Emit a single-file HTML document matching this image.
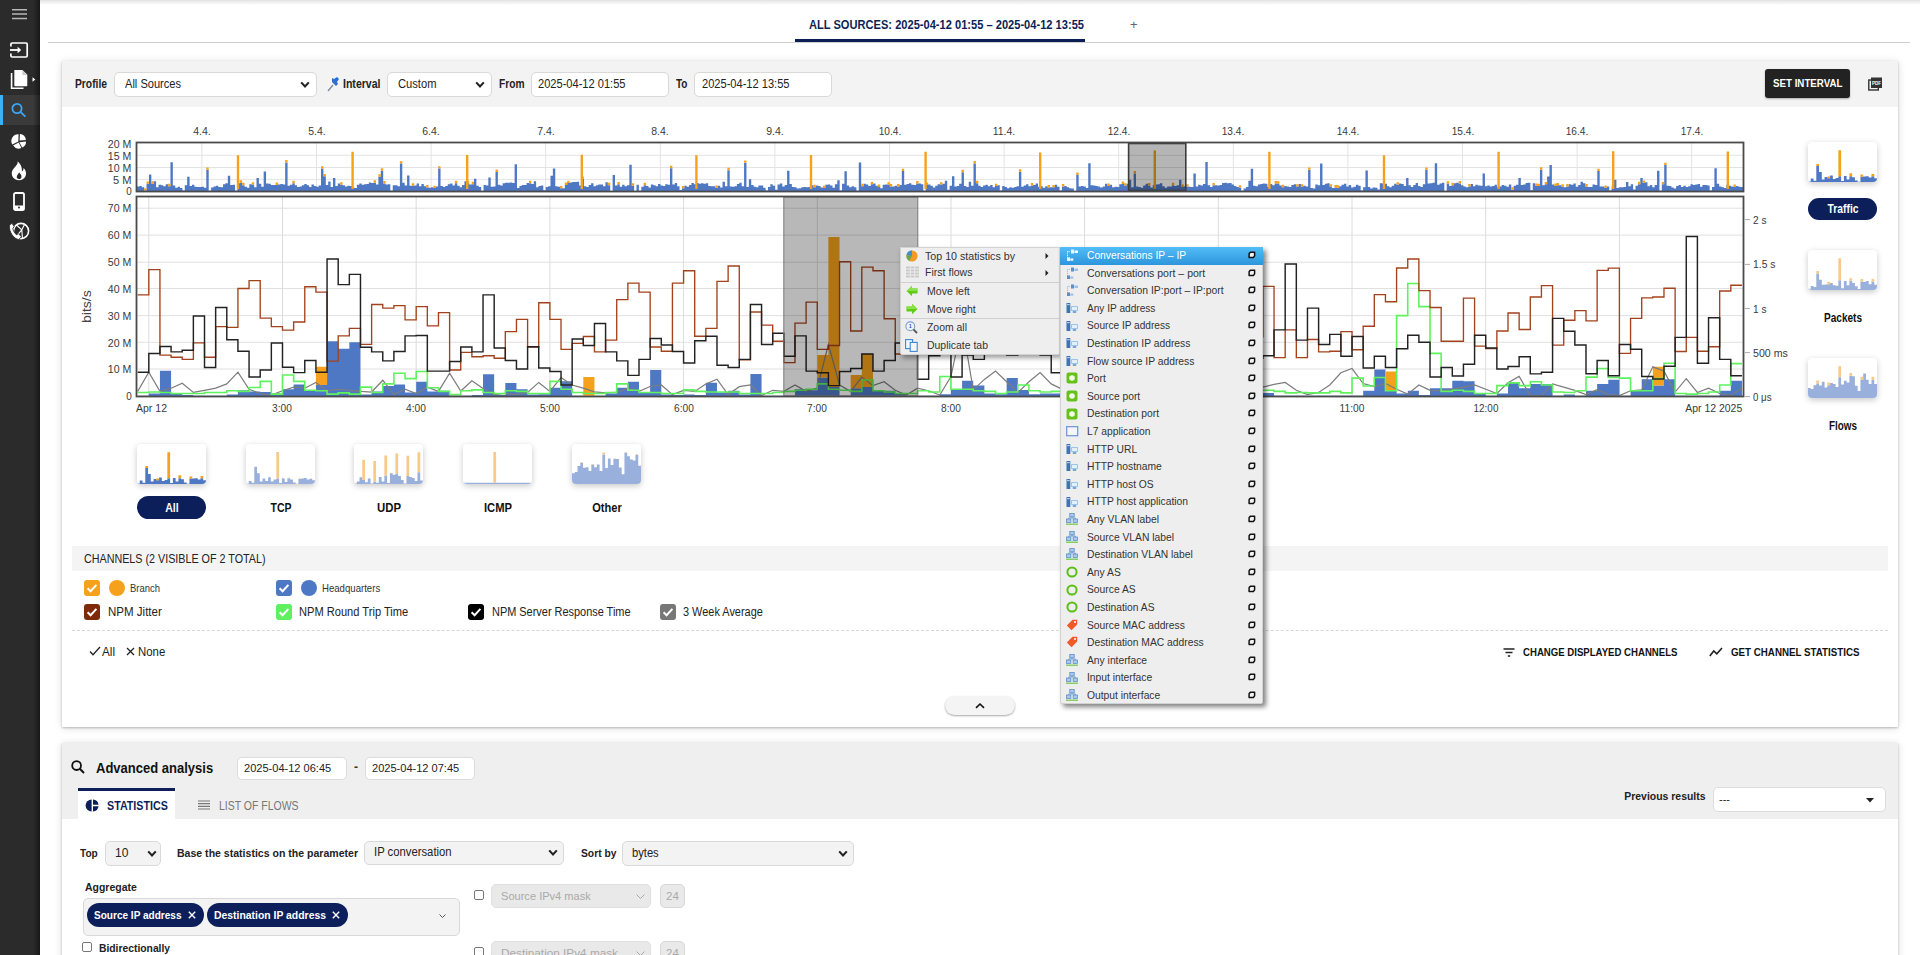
<!DOCTYPE html><html><head><meta charset="utf-8"><style>
*{box-sizing:border-box;margin:0;padding:0}
html,body{width:1920px;height:955px;overflow:hidden;background:#fff;font-family:"Liberation Sans",sans-serif;color:#222}
.a{position:absolute}
.t{position:absolute;white-space:nowrap;line-height:1}
.sel{position:absolute;background:#fff;border:1px solid #d9d9d9;border-radius:5px}
svg{position:absolute;overflow:visible}
</style></head><body><div class="a" style="left:40px;top:0;width:1880px;height:5px;background:linear-gradient(#e2e2e2,#fff)"></div><div class="a" style="left:0;top:0;width:40px;height:955px;background:#2b2b2b"></div><div class="a" style="left:0;top:95px;width:40px;height:30px;background:#3a3a3a"></div><div class="a" style="left:0;top:95px;width:3px;height:30px;background:#3ab0f6"></div><div class="a" style="left:33px;top:0;width:7px;height:955px;background:linear-gradient(90deg,rgba(0,0,0,0),rgba(0,0,0,.45))"></div><svg style="left:12px;top:8px" width="15" height="12" viewBox="0 0 15 12"><path d="M0 1.8H15M0 6H15M0 10.4H15" stroke="#b8b8b8" stroke-width="1.5"/></svg><svg style="left:9px;top:42px" width="20" height="16" viewBox="0 0 20 16"><path d="M1.9 4.6V2.2C1.9 1.5 2.4 1 3.1 1H17C17.7 1 18.2 1.5 18.2 2.2V13.8C18.2 14.5 17.7 15 17 15H3.1C2.4 15 1.9 14.5 1.9 13.8V11.4" fill="none" stroke="#fff" stroke-width="1.7"/><path d="M1 8H10.5" stroke="#fff" stroke-width="1.8"/><path d="M8.6 4.8L12.2 8L8.6 11.2Z" fill="#fff"/></svg><svg style="left:10px;top:69px" width="28" height="21" viewBox="0 0 28 21"><path d="M1.6 4V19.2H13.5" fill="none" stroke="#fff" stroke-width="1.6"/><path d="M4.3 1.6C4.3 1.2 4.6 0.9 5 0.9H12.5L17.3 5.7V16.5C17.3 16.9 17 17.2 16.6 17.2H5C4.6 17.2 4.3 16.9 4.3 16.5Z" fill="#fff"/><path d="M12.3 0.9V5.9H17.3" fill="#ccc"/><path d="M22.5 8.3L25.3 10.5L22.5 12.7Z" fill="#fff"/></svg><svg style="left:11px;top:101px" width="16" height="17" viewBox="0 0 16 17"><circle cx="6" cy="7.5" r="4.6" fill="none" stroke="#3aa6f5" stroke-width="1.8"/><path d="M9.4 10.9L14.4 15.6" stroke="#3aa6f5" stroke-width="1.9"/></svg><svg style="left:11px;top:133px" width="16" height="16" viewBox="0 0 16 16"><path d="M7.3 8.6L7.6 1.2A6.9 6.9 0 0 0 1.3 11.6Z" fill="#fff"/><path d="M8.6 7.4L8.9 0.9A6.8 6.8 0 0 1 14.9 6.9Z" fill="#fff"/><path d="M8.4 9.2L15 8.4A6.8 6.8 0 0 1 11.2 14.6Z" fill="#fff"/><path d="M7.7 9.6L10.3 15.1A6.8 6.8 0 0 1 2.1 12.6Z" fill="#fff"/></svg><svg style="left:11px;top:161px" width="16" height="20" viewBox="0 0 16 20"><path d="M6.5 0.5C7.5 3.5 3.2 6 1.4 9.6C-0.6 13.8 2.2 19.2 8 19.3C13.8 19.3 16.3 13.7 14.4 9.5C13.9 8.4 13.2 7.6 12.5 7C12.6 8.6 12 9.9 10.9 10.6C11.3 6.5 9.6 2.6 6.5 0.5Z" fill="#fff"/><path d="M8.2 11.3C9.2 13 10.8 14.2 10.5 16.2C10.2 17.6 9.1 18 8 18C6.4 18 5.6 16.8 5.8 15.5C6 14 7.4 13.4 8.2 11.3Z" fill="#282828"/></svg><svg style="left:13px;top:192px" width="12" height="19" viewBox="0 0 12 19"><rect x="1" y="1" width="10" height="17" rx="1.6" fill="none" stroke="#fff" stroke-width="1.8"/><rect x="1.5" y="13.5" width="9" height="4" fill="#fff"/><circle cx="6" cy="15.6" r="1" fill="#282828"/></svg><svg style="left:8px;top:221px" width="22" height="21" viewBox="0 0 22 21"><circle cx="13" cy="10" r="7.6" fill="none" stroke="#fff" stroke-width="1.6"/><path d="M8.5 4L13.8 8.8L16.5 3.5M13.8 8.8L14.5 17.6M13.8 8.8L8.2 15.6" fill="none" stroke="#fff" stroke-width="1.1"/><path d="M1.5 4.6C2.3 3.4 3.1 2.6 4.1 2.3L6.2 5.8L4.9 7.2C4.9 9.5 6.7 12.7 8.8 13.8L10.3 12.6L13.2 15.5C12.8 16.6 11.8 17.9 10.6 18.4C6.3 18.3 0.6 10.9 1.5 4.6Z" fill="#fff" stroke="#282828" stroke-width="0.8"/></svg><div class="t" style="left:809px;top:18.7px;font-size:12px;font-weight:bold;color:#0c1f55;transform:scaleX(0.9250);transform-origin:0 0;">ALL SOURCES: 2025-04-12 01:55 – 2025-04-12 13:55</div><div class="a" style="left:795px;top:39px;width:290px;height:3px;background:#0c1f55"></div><div class="a" style="left:48px;top:42px;width:1862px;height:1px;background:#cfcfcf"></div><div class="t" style="left:1130px;top:18.2px;font-size:13px;font-weight:normal;color:#666;">+</div><div class="a" style="left:62px;top:61px;width:1836px;height:666px;background:#fff;box-shadow:0 1px 2px rgba(0,0,0,.22),0 1px 8px rgba(0,0,0,.14)"></div><div class="a" style="left:62px;top:61px;width:1836px;height:46px;background:#f3f3f3"></div><div class="t" style="left:75px;top:78.2px;font-size:12px;font-weight:bold;color:#222;transform:scaleX(0.8569);transform-origin:0 0;">Profile</div><div class="sel" style="left:114px;top:72px;width:203px;height:25px"></div><div class="t" style="left:124.5px;top:78.2px;font-size:12px;font-weight:normal;color:#222;transform:scaleX(0.9225);transform-origin:0 0;">All Sources</div><svg style="left:300px;top:80.5px" width="10" height="7" viewBox="0 0 10 7"><path d="M1.2 1.4 L5.0 5.4 L8.8 1.4" fill="none" stroke="#222" stroke-width="2.1"/></svg><svg style="left:327px;top:76px" width="14" height="16" viewBox="0 0 14 16"><path d="M1 15 L6 9" stroke="#7a8a9a" stroke-width="1.3"/><path d="M5 6 L9 10 L11 8 L10 6 L12 3 L10 1 L7 3 L5 2 Z" fill="#2b6fd6"/></svg><div class="t" style="left:343px;top:78.2px;font-size:12px;font-weight:bold;color:#222;transform:scaleX(0.8785);transform-origin:0 0;">Interval</div><div class="sel" style="left:387px;top:72px;width:105px;height:25px"></div><div class="t" style="left:397.5px;top:78.2px;font-size:12px;font-weight:normal;color:#222;transform:scaleX(0.9312);transform-origin:0 0;">Custom</div><svg style="left:475px;top:80.5px" width="10" height="7" viewBox="0 0 10 7"><path d="M1.2 1.4 L5.0 5.4 L8.8 1.4" fill="none" stroke="#222" stroke-width="2.1"/></svg><div class="t" style="left:498.5px;top:78.2px;font-size:12px;font-weight:bold;color:#222;transform:scaleX(0.8500);transform-origin:0 0;">From</div><div class="sel" style="left:531px;top:72px;width:138px;height:25px"></div><div class="t" style="left:538px;top:78.2px;font-size:12px;font-weight:normal;color:#222;transform:scaleX(0.9235);transform-origin:0 0;">2025-04-12 01:55</div><div class="t" style="left:676px;top:78.2px;font-size:12px;font-weight:bold;color:#222;transform:scaleX(0.8345);transform-origin:0 0;">To</div><div class="sel" style="left:694px;top:72px;width:138px;height:25px"></div><div class="t" style="left:701.5px;top:78.2px;font-size:12px;font-weight:normal;color:#222;transform:scaleX(0.9235);transform-origin:0 0;">2025-04-12 13:55</div><div class="a" style="left:1765px;top:69px;width:85px;height:29px;background:#222;border-radius:3px;box-shadow:0 1px 2px rgba(0,0,0,.3)"></div><div class="t" style="left:1773px;top:78.2px;font-size:11px;font-weight:bold;color:#fff;transform:scaleX(0.8861);transform-origin:0 0;">SET INTERVAL</div><svg style="left:1868px;top:77px" width="14" height="14" viewBox="0 0 14 14"><rect x="0.8" y="3" width="9.5" height="10" fill="none" stroke="#333" stroke-width="1.4"/><rect x="3" y="0.5" width="11" height="10.5" fill="#333"/><text x="8.5" y="7.5" font-size="4.5" font-family="Liberation Sans" font-weight="bold" fill="#fff" text-anchor="middle">PDF</text></svg><svg style="left:0;top:0" width="1920" height="955" viewBox="0 0 1920 955"><line x1="137" x2="1743" y1="155.3" y2="155.3" stroke="#e3e3e3" stroke-width="1"/><line x1="137" x2="1743" y1="167.5" y2="167.5" stroke="#e3e3e3" stroke-width="1"/><line x1="137" x2="1743" y1="179.4" y2="179.4" stroke="#e3e3e3" stroke-width="1"/><line x1="201.9" x2="201.9" y1="143" y2="191" stroke="#e3e3e3" stroke-width="1"/><line x1="316.5" x2="316.5" y1="143" y2="191" stroke="#e3e3e3" stroke-width="1"/><line x1="431.1" x2="431.1" y1="143" y2="191" stroke="#e3e3e3" stroke-width="1"/><line x1="545.7" x2="545.7" y1="143" y2="191" stroke="#e3e3e3" stroke-width="1"/><line x1="660.3" x2="660.3" y1="143" y2="191" stroke="#e3e3e3" stroke-width="1"/><line x1="774.9" x2="774.9" y1="143" y2="191" stroke="#e3e3e3" stroke-width="1"/><line x1="889.5" x2="889.5" y1="143" y2="191" stroke="#e3e3e3" stroke-width="1"/><line x1="1004.1" x2="1004.1" y1="143" y2="191" stroke="#e3e3e3" stroke-width="1"/><line x1="1118.7" x2="1118.7" y1="143" y2="191" stroke="#e3e3e3" stroke-width="1"/><line x1="1233.3" x2="1233.3" y1="143" y2="191" stroke="#e3e3e3" stroke-width="1"/><line x1="1347.9" x2="1347.9" y1="143" y2="191" stroke="#e3e3e3" stroke-width="1"/><line x1="1462.5" x2="1462.5" y1="143" y2="191" stroke="#e3e3e3" stroke-width="1"/><line x1="1577.1" x2="1577.1" y1="143" y2="191" stroke="#e3e3e3" stroke-width="1"/><line x1="1691.7" x2="1691.7" y1="143" y2="191" stroke="#e3e3e3" stroke-width="1"/><path d="M137.00 191V186.56H139.39V191ZM139.39 191V186.12H141.78V191ZM141.78 191V187.18H144.17V191ZM144.17 191V190.56H146.56V191ZM146.56 191V183.84H148.95V191ZM148.95 191V174.44H151.34V191ZM151.34 191V183.66H153.73V191ZM153.73 191V181.23H156.12V191ZM156.12 191V187.16H158.51V191ZM158.51 191V184.70H160.90V191ZM160.90 191V185.13H163.29V191ZM163.29 191V186.32H165.68V191ZM165.68 191V184.33H168.07V191ZM168.07 191V186.18H170.46V191ZM170.46 191V162.21H172.85V191ZM172.85 191V185.59H175.24V191ZM175.24 191V187.77H177.63V191ZM177.63 191V186.65H180.02V191ZM180.02 191V187.92H182.41V191ZM182.41 191V190.52H184.80V191ZM184.80 191V185.28H187.19V191ZM187.19 191V176.86H189.58V191ZM189.58 191V185.98H191.97V191ZM191.97 191V184.66H194.36V191ZM194.36 191V186.83H196.75V191ZM196.75 191V187.12H199.14V191ZM199.14 191V187.10H201.53V191ZM201.53 191V186.68H203.92V191ZM203.92 191V187.81H206.31V191ZM206.31 191V169.80H208.70V191ZM208.70 191V190.87H211.09V191ZM211.09 191V187.48H213.48V191ZM213.48 191V186.59H215.87V191ZM215.87 191V185.64H218.26V191ZM218.26 191V187.11H220.65V191ZM220.65 191V187.34H223.04V191ZM223.04 191V184.34H225.43V191ZM225.43 191V183.25H227.82V191ZM227.82 191V175.67H230.21V191ZM230.21 191V184.91H232.60V191ZM232.60 191V184.79H234.99V191ZM234.99 191V190.67H237.38V191ZM237.38 191V183.31H239.77V191ZM239.77 191V182.63H242.16V191ZM242.16 191V185.23H244.55V191ZM244.55 191V186.82H246.94V191ZM246.94 191V187.74H249.33V191ZM249.33 191V184.34H251.72V191ZM251.72 191V184.59H254.11V191ZM254.11 191V187.24H256.50V191ZM256.50 191V178.02H258.89V191ZM258.89 191V183.87H261.28V191ZM261.28 191V186.66H263.67V191ZM263.67 191V171.44H266.06V191ZM266.06 191V183.59H268.45V191ZM268.45 191V183.80H270.84V191ZM270.84 191V185.10H273.23V191ZM273.23 191V184.98H275.62V191ZM275.62 191V184.88H278.01V191ZM278.01 191V184.59H280.40V191ZM280.40 191V184.05H282.79V191ZM282.79 191V184.47H285.18V191ZM285.18 191V162.48H287.57V191ZM287.57 191V185.66H289.96V191ZM289.96 191V184.67H292.35V191ZM292.35 191V183.23H294.74V191ZM294.74 191V185.36H297.13V191ZM297.13 191V186.91H299.52V191ZM299.52 191V186.38H301.91V191ZM301.91 191V185.14H304.30V191ZM304.30 191V183.95H306.69V191ZM306.69 191V185.31H309.08V191ZM309.08 191V187.04H311.47V191ZM311.47 191V184.62H313.86V191ZM313.86 191V186.09H316.25V191ZM316.25 191V186.76H318.64V191ZM318.64 191V185.49H321.03V191ZM321.03 191V168.58H323.42V191ZM323.42 191V176.32H325.81V191ZM325.81 191V185.10H328.20V191ZM328.20 191V181.62H330.59V191ZM330.59 191V186.95H332.98V191ZM332.98 191V178.07H335.37V191ZM335.37 191V185.92H337.76V191ZM337.76 191V183.62H340.15V191ZM340.15 191V184.75H342.54V191ZM342.54 191V185.28H344.93V191ZM344.93 191V186.41H347.32V191ZM347.32 191V185.81H349.71V191ZM349.71 191V186.11H352.10V191ZM352.10 191V187.61H354.49V191ZM354.49 191V188.10H356.88V191ZM356.88 191V184.82H359.27V191ZM359.27 191V183.48H361.66V191ZM361.66 191V184.74H364.05V191ZM364.05 191V184.15H366.44V191ZM366.44 191V183.91H368.83V191ZM368.83 191V182.62H371.22V191ZM371.22 191V182.89H373.61V191ZM373.61 191V182.72H376.00V191ZM376.00 191V184.50H378.39V191ZM378.39 191V176.77H380.78V191ZM380.78 191V170.68H383.17V191ZM383.17 191V183.50H385.56V191ZM385.56 191V184.52H387.95V191ZM387.95 191V184.20H390.34V191ZM390.34 191V190.68H392.73V191ZM392.73 191V185.25H395.12V191ZM395.12 191V185.28H397.51V191ZM397.51 191V186.23H399.90V191ZM399.90 191V163.56H402.29V191ZM402.29 191V182.72H404.68V191ZM404.68 191V185.58H407.07V191ZM407.07 191V175.62H409.46V191ZM409.46 191V185.73H411.85V191ZM411.85 191V185.63H414.24V191ZM414.24 191V185.38H416.63V191ZM416.63 191V183.53H419.02V191ZM419.02 191V186.28H421.41V191ZM421.41 191V184.04H423.80V191ZM423.80 191V186.22H426.19V191ZM426.19 191V187.47H428.58V191ZM428.58 191V187.75H430.97V191ZM430.97 191V187.30H433.36V191ZM433.36 191V188.07H435.75V191ZM435.75 191V186.60H438.14V191ZM438.14 191V168.54H440.53V191ZM440.53 191V186.03H442.92V191ZM442.92 191V187.06H445.31V191ZM445.31 191V186.06H447.70V191ZM447.70 191V184.14H450.09V191ZM450.09 191V183.48H452.48V191ZM452.48 191V185.41H454.87V191ZM454.87 191V183.21H457.26V191ZM457.26 191V185.63H459.65V191ZM459.65 191V187.36H462.04V191ZM462.04 191V185.02H464.43V191ZM464.43 191V181.15H466.82V191ZM466.82 191V183.17H469.21V191ZM469.21 191V184.41H471.60V191ZM471.60 191V184.17H473.99V191ZM473.99 191V178.63H476.38V191ZM476.38 191V185.70H478.77V191ZM478.77 191V186.91H481.16V191ZM481.16 191V190.91H483.55V191ZM483.55 191V185.08H485.94V191ZM485.94 191V185.45H488.33V191ZM488.33 191V177.55H490.72V191ZM490.72 191V186.70H493.11V191ZM493.11 191V186.45H495.50V191ZM495.50 191V172.00H497.89V191ZM497.89 191V184.73H500.28V191ZM500.28 191V185.57H502.67V191ZM502.67 191V183.36H505.06V191ZM505.06 191V182.68H507.45V191ZM507.45 191V182.81H509.84V191ZM509.84 191V182.57H512.23V191ZM512.23 191V182.98H514.62V191ZM514.62 191V164.30H517.01V191ZM517.01 191V188.04H519.40V191ZM519.40 191V186.07H521.79V191ZM521.79 191V185.00H524.18V191ZM524.18 191V184.95H526.57V191ZM526.57 191V183.00H528.96V191ZM528.96 191V183.19H531.35V191ZM531.35 191V183.93H533.74V191ZM533.74 191V181.19H536.13V191ZM536.13 191V187.17H538.52V191ZM538.52 191V186.01H540.91V191ZM540.91 191V185.42H543.30V191ZM543.30 191V190.14H545.69V191ZM545.69 191V186.88H548.08V191ZM548.08 191V186.24H550.47V191ZM550.47 191V175.79H552.86V191ZM552.86 191V168.56H555.25V191ZM555.25 191V186.36H557.64V191ZM557.64 191V186.85H560.03V191ZM560.03 191V188.28H562.42V191ZM562.42 191V188.28H564.81V191ZM564.81 191V184.96H567.20V191ZM567.20 191V183.05H569.59V191ZM569.59 191V182.57H571.98V191ZM571.98 191V182.05H574.37V191ZM574.37 191V181.97H576.76V191ZM576.76 191V181.75H579.15V191ZM579.15 191V185.53H581.54V191ZM581.54 191V178.80H583.93V191ZM583.93 191V186.35H586.32V191ZM586.32 191V186.94H588.71V191ZM588.71 191V184.89H591.10V191ZM591.10 191V183.18H593.49V191ZM593.49 191V186.18H595.88V191ZM595.88 191V185.23H598.27V191ZM598.27 191V184.54H600.66V191ZM600.66 191V184.46H603.05V191ZM603.05 191V186.15H605.44V191ZM605.44 191V182.16H607.83V191ZM607.83 191V185.19H610.22V191ZM610.22 191V190.88H612.61V191ZM612.61 191V174.97H615.00V191ZM615.00 191V185.41H617.39V191ZM617.39 191V184.35H619.78V191ZM619.78 191V186.68H622.17V191ZM622.17 191V184.81H624.56V191ZM624.56 191V186.27H626.95V191ZM626.95 191V185.14H629.34V191ZM629.34 191V164.74H631.73V191ZM631.73 191V185.64H634.12V191ZM634.12 191V190.88H636.51V191ZM636.51 191V184.82H638.90V191ZM638.90 191V190.69H641.29V191ZM641.29 191V186.67H643.68V191ZM643.68 191V185.14H646.07V191ZM646.07 191V185.97H648.46V191ZM648.46 191V187.42H650.85V191ZM650.85 191V184.47H653.24V191ZM653.24 191V185.31H655.63V191ZM655.63 191V186.22H658.02V191ZM658.02 191V184.04H660.41V191ZM660.41 191V185.44H662.80V191ZM662.80 191V185.96H665.19V191ZM665.19 191V184.36H667.58V191ZM667.58 191V184.70H669.97V191ZM669.97 191V168.27H672.36V191ZM672.36 191V184.48H674.75V191ZM674.75 191V182.94H677.14V191ZM677.14 191V186.29H679.53V191ZM679.53 191V189.94H681.92V191ZM681.92 191V188.35H684.31V191ZM684.31 191V185.67H686.70V191ZM686.70 191V186.82H689.09V191ZM689.09 191V184.89H691.48V191ZM691.48 191V183.11H693.87V191ZM693.87 191V184.25H696.26V191ZM696.26 191V183.06H698.65V191ZM698.65 191V183.64H701.04V191ZM701.04 191V183.16H703.43V191ZM703.43 191V183.80H705.82V191ZM705.82 191V183.37H708.21V191ZM708.21 191V186.12H710.60V191ZM710.60 191V186.33H712.99V191ZM712.99 191V186.20H715.38V191ZM715.38 191V187.78H717.77V191ZM717.77 191V185.85H720.16V191ZM720.16 191V187.61H722.55V191ZM722.55 191V181.82H724.94V191ZM724.94 191V186.35H727.33V191ZM727.33 191V170.17H729.72V191ZM729.72 191V186.45H732.11V191ZM732.11 191V186.76H734.50V191ZM734.50 191V186.15H736.89V191ZM736.89 191V183.92H739.28V191ZM739.28 191V182.73H741.67V191ZM741.67 191V186.26H744.06V191ZM744.06 191V162.84H746.45V191ZM746.45 191V186.88H748.84V191ZM748.84 191V179.20H751.23V191ZM751.23 191V184.96H753.62V191ZM753.62 191V186.78H756.01V191ZM756.01 191V187.15H758.40V191ZM758.40 191V185.62H760.79V191ZM760.79 191V185.39H763.18V191ZM763.18 191V187.68H765.57V191ZM765.57 191V190.61H767.96V191ZM767.96 191V187.08H770.35V191ZM770.35 191V184.16H772.74V191ZM772.74 191V185.77H775.13V191ZM775.13 191V189.81H777.52V191ZM777.52 191V184.50H779.91V191ZM779.91 191V183.55H782.30V191ZM782.30 191V186.51H784.69V191ZM784.69 191V184.98H787.08V191ZM787.08 191V170.77H789.47V191ZM789.47 191V184.08H791.86V191ZM791.86 191V187.04H794.25V191ZM794.25 191V187.36H796.64V191ZM796.64 191V188.52H799.03V191ZM799.03 191V188.17H801.42V191ZM801.42 191V187.25H803.81V191ZM803.81 191V187.00H806.20V191ZM806.20 191V187.26H808.59V191ZM808.59 191V187.05H810.98V191ZM810.98 191V185.18H813.37V191ZM813.37 191V187.18H815.76V191ZM815.76 191V185.45H818.15V191ZM818.15 191V185.90H820.54V191ZM820.54 191V187.51H822.93V191ZM822.93 191V188.08H825.32V191ZM825.32 191V184.76H827.71V191ZM827.71 191V184.50H830.10V191ZM830.10 191V185.55H832.49V191ZM832.49 191V187.69H834.88V191ZM834.88 191V184.31H837.27V191ZM837.27 191V180.22H839.66V191ZM839.66 191V190.46H842.05V191ZM842.05 191V183.68H844.44V191ZM844.44 191V171.29H846.83V191ZM846.83 191V185.59H849.22V191ZM849.22 191V187.14H851.61V191ZM851.61 191V186.15H854.00V191ZM854.00 191V187.14H856.39V191ZM856.39 191V190.65H858.78V191ZM858.78 191V162.44H861.17V191ZM861.17 191V186.13H863.56V191ZM863.56 191V183.65H865.95V191ZM865.95 191V184.46H868.34V191ZM868.34 191V186.08H870.73V191ZM870.73 191V184.32H873.12V191ZM873.12 191V183.50H875.51V191ZM875.51 191V185.75H877.90V191ZM877.90 191V187.01H880.29V191ZM880.29 191V188.27H882.68V191ZM882.68 191V184.76H885.07V191ZM885.07 191V184.39H887.46V191ZM887.46 191V184.58H889.85V191ZM889.85 191V186.42H892.24V191ZM892.24 191V186.41H894.63V191ZM894.63 191V185.81H897.02V191ZM897.02 191V186.38H899.41V191ZM899.41 191V185.12H901.80V191ZM901.80 191V171.04H904.19V191ZM904.19 191V184.65H906.58V191ZM906.58 191V183.98H908.97V191ZM908.97 191V183.29H911.36V191ZM911.36 191V184.79H913.75V191ZM913.75 191V185.05H916.14V191ZM916.14 191V183.47H918.53V191ZM918.53 191V183.56H920.92V191ZM920.92 191V184.18H923.31V191ZM923.31 191V190.82H925.70V191ZM925.70 191V185.02H928.09V191ZM928.09 191V184.40H930.48V191ZM930.48 191V185.86H932.87V191ZM932.87 191V187.59H935.26V191ZM935.26 191V185.69H937.65V191ZM937.65 191V184.20H940.04V191ZM940.04 191V184.61H942.43V191ZM942.43 191V183.77H944.82V191ZM944.82 191V180.84H947.21V191ZM947.21 191V189.71H949.60V191ZM949.60 191V185.73H951.99V191ZM951.99 191V176.13H954.38V191ZM954.38 191V186.45H956.77V191ZM956.77 191V186.04H959.16V191ZM959.16 191V183.84H961.55V191ZM961.55 191V172.24H963.94V191ZM963.94 191V185.94H966.33V191ZM966.33 191V187.02H968.72V191ZM968.72 191V181.84H971.11V191ZM971.11 191V185.86H973.50V191ZM973.50 191V163.40H975.89V191ZM975.89 191V183.16H978.28V191ZM978.28 191V185.68H980.67V191ZM980.67 191V186.93H983.06V191ZM983.06 191V185.39H985.45V191ZM985.45 191V184.71H987.84V191ZM987.84 191V186.35H990.23V191ZM990.23 191V185.12H992.62V191ZM992.62 191V187.16H995.01V191ZM995.01 191V186.11H997.40V191ZM997.40 191V185.32H999.79V191ZM999.79 191V190.59H1002.18V191ZM1002.18 191V185.97H1004.57V191ZM1004.57 191V187.11H1006.96V191ZM1006.96 191V188.31H1009.35V191ZM1009.35 191V187.27H1011.74V191ZM1011.74 191V187.72H1014.13V191ZM1014.13 191V187.12H1016.52V191ZM1016.52 191V186.14H1018.91V191ZM1018.91 191V171.70H1021.30V191ZM1021.30 191V186.71H1023.69V191ZM1023.69 191V185.55H1026.08V191ZM1026.08 191V184.28H1028.47V191ZM1028.47 191V186.13H1030.86V191ZM1030.86 191V185.41H1033.25V191ZM1033.25 191V185.01H1035.64V191ZM1035.64 191V183.60H1038.03V191ZM1038.03 191V186.80H1040.42V191ZM1040.42 191V186.33H1042.81V191ZM1042.81 191V187.78H1045.20V191ZM1045.20 191V186.32H1047.59V191ZM1047.59 191V187.45H1049.98V191ZM1049.98 191V187.20H1052.37V191ZM1052.37 191V187.31H1054.76V191ZM1054.76 191V184.86H1057.15V191ZM1057.15 191V186.73H1059.54V191ZM1059.54 191V190.41H1061.93V191ZM1061.93 191V186.43H1064.32V191ZM1064.32 191V185.95H1066.71V191ZM1066.71 191V187.29H1069.10V191ZM1069.10 191V188.36H1071.49V191ZM1071.49 191V188.39H1073.88V191ZM1073.88 191V190.95H1076.27V191ZM1076.27 191V174.93H1078.66V191ZM1078.66 191V186.39H1081.05V191ZM1081.05 191V186.06H1083.44V191ZM1083.44 191V186.47H1085.83V191ZM1085.83 191V187.99H1088.22V191ZM1088.22 191V163.21H1090.61V191ZM1090.61 191V185.24H1093.00V191ZM1093.00 191V185.54H1095.39V191ZM1095.39 191V186.04H1097.78V191ZM1097.78 191V186.42H1100.17V191ZM1100.17 191V187.41H1102.56V191ZM1102.56 191V186.49H1104.95V191ZM1104.95 191V183.72H1107.34V191ZM1107.34 191V186.01H1109.73V191ZM1109.73 191V184.86H1112.12V191ZM1112.12 191V187.36H1114.51V191ZM1114.51 191V186.81H1116.90V191ZM1116.90 191V187.12H1119.29V191ZM1119.29 191V184.26H1121.68V191ZM1121.68 191V183.93H1124.07V191ZM1124.07 191V185.58H1126.46V191ZM1126.46 191V183.81H1128.85V191ZM1128.85 191V179.76H1131.24V191ZM1131.24 191V187.16H1133.63V191ZM1133.63 191V173.39H1136.02V191ZM1136.02 191V186.57H1138.41V191ZM1138.41 191V187.05H1140.80V191ZM1140.80 191V187.77H1143.19V191ZM1143.19 191V185.55H1145.58V191ZM1145.58 191V183.87H1147.97V191ZM1147.97 191V185.45H1150.36V191ZM1150.36 191V187.60H1152.75V191ZM1152.75 191V185.05H1155.14V191ZM1155.14 191V184.52H1157.53V191ZM1157.53 191V184.20H1159.92V191ZM1159.92 191V183.25H1162.31V191ZM1162.31 191V186.32H1164.70V191ZM1164.70 191V187.83H1167.09V191ZM1167.09 191V186.55H1169.48V191ZM1169.48 191V186.40H1171.87V191ZM1171.87 191V185.15H1174.26V191ZM1174.26 191V186.04H1176.65V191ZM1176.65 191V185.36H1179.04V191ZM1179.04 191V179.78H1181.43V191ZM1181.43 191V187.01H1183.82V191ZM1183.82 191V186.19H1186.21V191ZM1186.21 191V186.58H1188.60V191ZM1188.60 191V186.66H1190.99V191ZM1190.99 191V187.08H1193.38V191ZM1193.38 191V173.39H1195.77V191ZM1195.77 191V186.48H1198.16V191ZM1198.16 191V184.71H1200.55V191ZM1200.55 191V185.53H1202.94V191ZM1202.94 191V184.03H1205.33V191ZM1205.33 191V161.93H1207.72V191ZM1207.72 191V185.22H1210.11V191ZM1210.11 191V186.93H1212.50V191ZM1212.50 191V185.33H1214.89V191ZM1214.89 191V185.21H1217.28V191ZM1217.28 191V185.39H1219.67V191ZM1219.67 191V184.88H1222.06V191ZM1222.06 191V183.11H1224.45V191ZM1224.45 191V182.68H1226.84V191ZM1226.84 191V183.34H1229.23V191ZM1229.23 191V183.06H1231.62V191ZM1231.62 191V184.43H1234.01V191ZM1234.01 191V185.97H1236.40V191ZM1236.40 191V186.88H1238.79V191ZM1238.79 191V187.56H1241.18V191ZM1241.18 191V190.85H1243.57V191ZM1243.57 191V188.52H1245.96V191ZM1245.96 191V186.93H1248.35V191ZM1248.35 191V180.77H1250.74V191ZM1250.74 191V168.65H1253.13V191ZM1253.13 191V185.79H1255.52V191ZM1255.52 191V186.37H1257.91V191ZM1257.91 191V184.40H1260.30V191ZM1260.30 191V184.07H1262.69V191ZM1262.69 191V183.49H1265.08V191ZM1265.08 191V183.83H1267.47V191ZM1267.47 191V186.92H1269.86V191ZM1269.86 191V184.02H1272.25V191ZM1272.25 191V185.18H1274.64V191ZM1274.64 191V183.40H1277.03V191ZM1277.03 191V183.59H1279.42V191ZM1279.42 191V185.59H1281.81V191ZM1281.81 191V187.23H1284.20V191ZM1284.20 191V186.08H1286.59V191ZM1286.59 191V186.61H1288.98V191ZM1288.98 191V186.96H1291.37V191ZM1291.37 191V184.95H1293.76V191ZM1293.76 191V184.37H1296.15V191ZM1296.15 191V186.57H1298.54V191ZM1298.54 191V184.02H1300.93V191ZM1300.93 191V186.53H1303.32V191ZM1303.32 191V185.66H1305.71V191ZM1305.71 191V186.57H1308.10V191ZM1308.10 191V169.79H1310.49V191ZM1310.49 191V187.93H1312.88V191ZM1312.88 191V188.47H1315.27V191ZM1315.27 191V184.60H1317.66V191ZM1317.66 191V185.15H1320.05V191ZM1320.05 191V163.43H1322.44V191ZM1322.44 191V185.07H1324.83V191ZM1324.83 191V183.66H1327.22V191ZM1327.22 191V183.16H1329.61V191ZM1329.61 191V186.56H1332.00V191ZM1332.00 191V187.88H1334.39V191ZM1334.39 191V187.41H1336.78V191ZM1336.78 191V187.65H1339.17V191ZM1339.17 191V186.33H1341.56V191ZM1341.56 191V184.81H1343.95V191ZM1343.95 191V183.71H1346.34V191ZM1346.34 191V186.47H1348.73V191ZM1348.73 191V185.01H1351.12V191ZM1351.12 191V187.41H1353.51V191ZM1353.51 191V186.85H1355.90V191ZM1355.90 191V184.70H1358.29V191ZM1358.29 191V185.78H1360.68V191ZM1360.68 191V190.52H1363.07V191ZM1363.07 191V187.20H1365.46V191ZM1365.46 191V170.52H1367.85V191ZM1367.85 191V187.07H1370.24V191ZM1370.24 191V188.40H1372.63V191ZM1372.63 191V187.59H1375.02V191ZM1375.02 191V187.76H1377.41V191ZM1377.41 191V189.58H1379.80V191ZM1379.80 191V183.35H1382.19V191ZM1382.19 191V183.60H1384.58V191ZM1384.58 191V183.84H1386.97V191ZM1386.97 191V186.16H1389.36V191ZM1389.36 191V187.37H1391.75V191ZM1391.75 191V185.68H1394.14V191ZM1394.14 191V183.83H1396.53V191ZM1396.53 191V184.72H1398.92V191ZM1398.92 191V183.62H1401.31V191ZM1401.31 191V183.90H1403.70V191ZM1403.70 191V185.98H1406.09V191ZM1406.09 191V178.08H1408.48V191ZM1408.48 191V185.13H1410.87V191ZM1410.87 191V186.89H1413.26V191ZM1413.26 191V185.04H1415.65V191ZM1415.65 191V183.09H1418.04V191ZM1418.04 191V186.08H1420.43V191ZM1420.43 191V186.94H1422.82V191ZM1422.82 191V184.17H1425.21V191ZM1425.21 191V169.80H1427.60V191ZM1427.60 191V183.53H1429.99V191ZM1429.99 191V183.22H1432.38V191ZM1432.38 191V182.82H1434.77V191ZM1434.77 191V163.34H1437.16V191ZM1437.16 191V184.69H1439.55V191ZM1439.55 191V183.53H1441.94V191ZM1441.94 191V182.78H1444.33V191ZM1444.33 191V190.95H1446.72V191ZM1446.72 191V183.57H1449.11V191ZM1449.11 191V186.05H1451.50V191ZM1451.50 191V185.21H1453.89V191ZM1453.89 191V183.17H1456.28V191ZM1456.28 191V182.75H1458.67V191ZM1458.67 191V183.50H1461.06V191ZM1461.06 191V185.31H1463.45V191ZM1463.45 191V186.40H1465.84V191ZM1465.84 191V187.33H1468.23V191ZM1468.23 191V186.46H1470.62V191ZM1470.62 191V183.94H1473.01V191ZM1473.01 191V186.15H1475.40V191ZM1475.40 191V184.72H1477.79V191ZM1477.79 191V185.55H1480.18V191ZM1480.18 191V185.85H1482.57V191ZM1482.57 191V173.53H1484.96V191ZM1484.96 191V186.33H1487.35V191ZM1487.35 191V185.51H1489.74V191ZM1489.74 191V186.45H1492.13V191ZM1492.13 191V186.12H1494.52V191ZM1494.52 191V184.68H1496.91V191ZM1496.91 191V187.07H1499.30V191ZM1499.30 191V186.46H1501.69V191ZM1501.69 191V185.05H1504.08V191ZM1504.08 191V185.68H1506.47V191ZM1506.47 191V186.69H1508.86V191ZM1508.86 191V184.58H1511.25V191ZM1511.25 191V189.71H1513.64V191ZM1513.64 191V185.82H1516.03V191ZM1516.03 191V184.87H1518.42V191ZM1518.42 191V178.04H1520.81V191ZM1520.81 191V185.07H1523.20V191ZM1523.20 191V184.53H1525.59V191ZM1525.59 191V182.91H1527.98V191ZM1527.98 191V182.85H1530.37V191ZM1530.37 191V190.33H1532.76V191ZM1532.76 191V183.24H1535.15V191ZM1535.15 191V185.78H1537.54V191ZM1537.54 191V186.09H1539.93V191ZM1539.93 191V169.66H1542.32V191ZM1542.32 191V185.19H1544.71V191ZM1544.71 191V184.31H1547.10V191ZM1547.10 191V176.41H1549.49V191ZM1549.49 191V164.97H1551.88V191ZM1551.88 191V184.45H1554.27V191ZM1554.27 191V185.91H1556.66V191ZM1556.66 191V185.37H1559.05V191ZM1559.05 191V185.37H1561.44V191ZM1561.44 191V186.57H1563.83V191ZM1563.83 191V187.24H1566.22V191ZM1566.22 191V186.45H1568.61V191ZM1568.61 191V184.35H1571.00V191ZM1571.00 191V184.86H1573.39V191ZM1573.39 191V183.57H1575.78V191ZM1575.78 191V186.82H1578.17V191ZM1578.17 191V185.03H1580.56V191ZM1580.56 191V181.81H1582.95V191ZM1582.95 191V183.23H1585.34V191ZM1585.34 191V186.51H1587.73V191ZM1587.73 191V187.02H1590.12V191ZM1590.12 191V186.94H1592.51V191ZM1592.51 191V184.40H1594.90V191ZM1594.90 191V184.99H1597.29V191ZM1597.29 191V171.08H1599.68V191ZM1599.68 191V186.38H1602.07V191ZM1602.07 191V186.52H1604.46V191ZM1604.46 191V187.97H1606.85V191ZM1606.85 191V186.48H1609.24V191ZM1609.24 191V190.46H1611.63V191ZM1611.63 191V186.31H1614.02V191ZM1614.02 191V179.67H1616.41V191ZM1616.41 191V187.89H1618.80V191ZM1618.80 191V187.17H1621.19V191ZM1621.19 191V187.13H1623.58V191ZM1623.58 191V187.05H1625.97V191ZM1625.97 191V181.93H1628.36V191ZM1628.36 191V186.32H1630.75V191ZM1630.75 191V184.24H1633.14V191ZM1633.14 191V189.58H1635.53V191ZM1635.53 191V185.64H1637.92V191ZM1637.92 191V184.26H1640.31V191ZM1640.31 191V178.10H1642.70V191ZM1642.70 191V182.78H1645.09V191ZM1645.09 191V182.32H1647.48V191ZM1647.48 191V186.28H1649.87V191ZM1649.87 191V185.03H1652.26V191ZM1652.26 191V187.19H1654.65V191ZM1654.65 191V185.12H1657.04V191ZM1657.04 191V170.86H1659.43V191ZM1659.43 191V190.83H1661.82V191ZM1661.82 191V184.28H1664.21V191ZM1664.21 191V165.08H1666.60V191ZM1666.60 191V185.74H1668.99V191ZM1668.99 191V185.98H1671.38V191ZM1671.38 191V187.39H1673.77V191ZM1673.77 191V188.44H1676.16V191ZM1676.16 191V186.03H1678.55V191ZM1678.55 191V184.88H1680.94V191ZM1680.94 191V186.98H1683.33V191ZM1683.33 191V185.77H1685.72V191ZM1685.72 191V187.12H1688.11V191ZM1688.11 191V186.13H1690.50V191ZM1690.50 191V184.24H1692.89V191ZM1692.89 191V185.01H1695.28V191ZM1695.28 191V184.38H1697.67V191ZM1697.67 191V183.95H1700.06V191ZM1700.06 191V186.75H1702.45V191ZM1702.45 191V185.08H1704.84V191ZM1704.84 191V185.03H1707.23V191ZM1707.23 191V185.48H1709.62V191ZM1709.62 191V190.56H1712.01V191ZM1712.01 191V187.05H1714.40V191ZM1714.40 191V168.35H1716.79V191ZM1716.79 191V183.67H1719.18V191ZM1719.18 191V186.47H1721.57V191ZM1721.57 191V187.28H1723.96V191ZM1723.96 191V187.99H1726.35V191ZM1726.35 191V184.82H1728.74V191ZM1728.74 191V185.79H1731.13V191ZM1731.13 191V186.56H1733.52V191ZM1733.52 191V187.02H1735.91V191ZM1735.91 191V186.01H1738.30V191ZM1738.30 191V186.83H1740.69V191ZM1740.69 191V187.11H1743.08V191Z" fill="#4f78c4"/><path d="M144.17 190.56V188.16H146.56V190.56ZM146.56 183.84V181.44H148.95V183.84ZM151.34 183.66V181.26H153.73V183.66ZM168.07 186.18V183.78H170.46V186.18ZM206.31 169.80V167.40H208.70V169.80ZM239.77 182.63V180.23H242.16V182.63ZM242.16 185.23V182.83H244.55V185.23ZM251.72 184.59V182.19H254.11V184.59ZM275.62 184.88V182.48H278.01V184.88ZM285.18 162.48V160.08H287.57V162.48ZM292.35 183.23V180.83H294.74V183.23ZM321.03 168.58V166.18H323.42V168.58ZM323.42 176.32V173.92H325.81V176.32ZM340.15 184.75V182.35H342.54V184.75ZM373.61 182.72V180.32H376.00V182.72ZM378.39 176.77V174.37H380.78V176.77ZM380.78 170.68V168.28H383.17V170.68ZM383.17 183.50V181.10H385.56V183.50ZM399.90 163.56V161.16H402.29V163.56ZM411.85 185.63V183.23H414.24V185.63ZM426.19 187.47V185.07H428.58V187.47ZM433.36 188.07V185.67H435.75V188.07ZM438.14 168.54V166.14H440.53V168.54ZM454.87 183.21V180.81H457.26V183.21ZM466.82 183.17V180.77H469.21V183.17ZM471.60 184.17V181.77H473.99V184.17ZM495.50 172.00V169.60H497.89V172.00ZM528.96 183.19V180.79H531.35V183.19ZM560.03 188.28V185.88H562.42V188.28ZM564.81 184.96V182.56H567.20V184.96ZM567.20 183.05V180.65H569.59V183.05ZM581.54 178.80V176.40H583.93V178.80ZM607.83 185.19V182.79H610.22V185.19ZM617.39 184.35V181.95H619.78V184.35ZM631.73 185.64V183.24H634.12V185.64ZM643.68 185.14V182.74H646.07V185.14ZM669.97 168.27V165.87H672.36V168.27ZM681.92 188.35V185.95H684.31V188.35ZM715.38 187.78V185.38H717.77V187.78ZM727.33 170.17V167.77H729.72V170.17ZM744.06 162.84V160.44H746.45V162.84ZM813.37 187.18V184.78H815.76V187.18ZM822.93 188.08V185.68H825.32V188.08ZM861.17 186.13V183.73H863.56V186.13ZM870.73 184.32V181.92H873.12V184.32ZM877.90 187.01V184.61H880.29V187.01ZM887.46 184.58V182.18H889.85V184.58ZM889.85 186.42V184.02H892.24V186.42ZM897.02 186.38V183.98H899.41V186.38ZM901.80 171.04V168.64H904.19V171.04ZM916.14 183.47V181.07H918.53V183.47ZM925.70 185.02V182.62H928.09V185.02ZM940.04 184.61V182.21H942.43V184.61ZM961.55 172.24V169.84H963.94V172.24ZM973.50 163.40V161.00H975.89V163.40ZM975.89 183.16V180.76H978.28V183.16ZM995.01 186.11V183.71H997.40V186.11ZM1018.91 171.70V169.30H1021.30V171.70ZM1030.86 185.41V183.01H1033.25V185.41ZM1047.59 187.45V185.05H1049.98V187.45ZM1052.37 187.31V184.91H1054.76V187.31ZM1061.93 186.43V184.03H1064.32V186.43ZM1076.27 174.93V172.53H1078.66V174.93ZM1107.34 186.01V183.61H1109.73V186.01ZM1121.68 183.93V181.53H1124.07V183.93ZM1124.07 185.58V183.18H1126.46V185.58ZM1133.63 173.39V170.99H1136.02V173.39ZM1147.97 185.45V183.05H1150.36V185.45ZM1171.87 185.15V182.75H1174.26V185.15ZM1181.43 187.01V184.61H1183.82V187.01ZM1186.21 186.58V184.18H1188.60V186.58ZM1212.50 185.33V182.93H1214.89V185.33ZM1238.79 187.56V185.16H1241.18V187.56ZM1274.64 183.40V181.00H1277.03V183.40ZM1277.03 183.59V181.19H1279.42V183.59ZM1281.81 187.23V184.83H1284.20V187.23ZM1296.15 186.57V184.17H1298.54V186.57ZM1300.93 186.53V184.13H1303.32V186.53ZM1308.10 169.79V167.39H1310.49V169.79ZM1329.61 186.56V184.16H1332.00V186.56ZM1334.39 187.41V185.01H1336.78V187.41ZM1336.78 187.65V185.25H1339.17V187.65ZM1396.53 184.72V182.32H1398.92V184.72ZM1425.21 169.80V167.40H1427.60V169.80ZM1446.72 183.57V181.17H1449.11V183.57ZM1451.50 185.21V182.81H1453.89V185.21ZM1458.67 183.50V181.10H1461.06V183.50ZM1468.23 186.46V184.06H1470.62V186.46ZM1511.25 189.71V187.31H1513.64V189.71ZM1535.15 185.78V183.38H1537.54V185.78ZM1537.54 186.09V183.69H1539.93V186.09ZM1539.93 169.66V167.26H1542.32V169.66ZM1544.71 184.31V181.91H1547.10V184.31ZM1554.27 185.91V183.51H1556.66V185.91ZM1556.66 185.37V182.97H1559.05V185.37ZM1561.44 186.57V184.17H1563.83V186.57ZM1566.22 186.45V184.05H1568.61V186.45ZM1585.34 186.51V184.11H1587.73V186.51ZM1597.29 171.08V168.68H1599.68V171.08ZM1604.46 187.97V185.57H1606.85V187.97ZM1637.92 184.26V181.86H1640.31V184.26ZM1642.70 182.78V180.38H1645.09V182.78ZM1661.82 184.28V181.88H1664.21V184.28ZM1664.21 165.08V162.68H1666.60V165.08ZM1733.52 187.02V184.62H1735.91V187.02ZM236.80 189V155.19H239.19V189ZM351.40 189V151.63H353.79V189ZM466.00 189V154.90H468.39V189ZM580.60 189V154.85H582.99V189ZM695.20 189V155.32H697.59V189ZM809.80 189V155.07H812.19V189ZM924.40 189V151.76H926.79V189ZM1039.00 189V152.52H1041.39V189ZM1153.60 189V150.46H1155.99V189ZM1268.20 189V151.86H1270.59V189ZM1382.80 189V155.31H1385.19V189ZM1497.40 189V151.84H1499.79V189ZM1612.00 189V151.29H1614.39V189ZM1726.60 189V151.41H1728.99V189Z" fill="#f5a11b"/><rect x="1128.6" y="143.5" width="57.2" height="47" fill="rgba(0,0,0,0.29)" stroke="#3c3c3c" stroke-width="1.6"/><rect x="136.5" y="142.5" width="1607" height="49" fill="none" stroke="#4a4a4a" stroke-width="1.8"/><line x1="137" x2="1743" y1="208.2" y2="208.2" stroke="#e0e0e0" stroke-width="1"/><line x1="137" x2="1743" y1="235.1" y2="235.1" stroke="#e0e0e0" stroke-width="1"/><line x1="137" x2="1743" y1="262.2" y2="262.2" stroke="#e0e0e0" stroke-width="1"/><line x1="137" x2="1743" y1="288.5" y2="288.5" stroke="#e0e0e0" stroke-width="1"/><line x1="137" x2="1743" y1="315.6" y2="315.6" stroke="#e0e0e0" stroke-width="1"/><line x1="137" x2="1743" y1="342.3" y2="342.3" stroke="#e0e0e0" stroke-width="1"/><line x1="137" x2="1743" y1="369" y2="369" stroke="#e0e0e0" stroke-width="1"/><line x1="148.8" x2="148.8" y1="197" y2="396" stroke="#dcdcdc" stroke-width="1"/><line x1="282.5" x2="282.5" y1="197" y2="396" stroke="#dcdcdc" stroke-width="1"/><line x1="416.2" x2="416.2" y1="197" y2="396" stroke="#dcdcdc" stroke-width="1"/><line x1="549.9" x2="549.9" y1="197" y2="396" stroke="#dcdcdc" stroke-width="1"/><line x1="683.6" x2="683.6" y1="197" y2="396" stroke="#dcdcdc" stroke-width="1"/><line x1="817.3" x2="817.3" y1="197" y2="396" stroke="#dcdcdc" stroke-width="1"/><line x1="951.0" x2="951.0" y1="197" y2="396" stroke="#dcdcdc" stroke-width="1"/><line x1="1084.6" x2="1084.6" y1="197" y2="396" stroke="#dcdcdc" stroke-width="1"/><line x1="1218.3" x2="1218.3" y1="197" y2="396" stroke="#dcdcdc" stroke-width="1"/><line x1="1352.0" x2="1352.0" y1="197" y2="396" stroke="#dcdcdc" stroke-width="1"/><line x1="1485.7" x2="1485.7" y1="197" y2="396" stroke="#dcdcdc" stroke-width="1"/><line x1="1619.4" x2="1619.4" y1="197" y2="396" stroke="#dcdcdc" stroke-width="1"/><path d="M137.66 396V395.66H148.80V396ZM148.80 396V393.52H159.94V396ZM159.94 396V370.67H171.08V396ZM171.08 396V393.52H182.22V396ZM182.22 396V395.02H193.37V396ZM193.37 396V395.66H204.51V396ZM204.51 396V395.66H215.65V396ZM215.65 396V395.66H226.79V396ZM226.79 396V394.59H237.93V396ZM237.93 396V390.32H249.07V396ZM249.07 396V391.39H260.21V396ZM260.21 396V392.03H271.35V396ZM271.35 396V393.52H282.49V396ZM282.49 396V389.25H293.63V396ZM293.63 396V384.55H304.77V396ZM304.77 396V390.32H315.92V396ZM315.92 396V384.98H327.06V396ZM327.06 396V341.21H338.20V396ZM338.20 396V348.68H349.34V396ZM349.34 396V342.27H360.48V396ZM360.48 396V394.59H371.62V396ZM371.62 396V391.39H382.76V396ZM382.76 396V386.05H393.90V396ZM393.90 396V384.55H405.04V396ZM405.04 396V392.46H416.18V396ZM416.18 396V381.78H427.33V396ZM427.33 396V391.39H438.47V396ZM438.47 396V390.75H449.61V396ZM449.61 396V395.66H460.75V396ZM460.75 396V395.66H471.89V396ZM471.89 396V395.02H483.03V396ZM483.03 396V374.30H494.17V396ZM494.17 396V395.02H505.31V396ZM505.31 396V383.06H516.45V396ZM516.45 396V389.25H527.60V396ZM527.60 396V394.59H538.74V396ZM538.74 396V394.16H549.88V396ZM549.88 396V387.76H561.02V396ZM561.02 396V381.35H572.16V396ZM572.16 396V395.66H583.30V396ZM583.30 396V395.66H594.44V396ZM594.44 396V395.66H605.58V396ZM605.58 396V393.52H616.72V396ZM616.72 396V387.76H627.86V396ZM627.86 396V381.78H639.00V396ZM639.00 396V392.46H650.15V396ZM650.15 396V370.03H661.29V396ZM661.29 396V394.59H672.43V396ZM672.43 396V395.02H683.57V396ZM683.57 396V394.59H694.71V396ZM694.71 396V395.02H705.85V396ZM705.85 396V382.85H716.99V396ZM716.99 396V392.46H728.13V396ZM728.13 396V390.75H739.27V396ZM739.27 396V394.59H750.41V396ZM750.41 396V373.88H761.56V396ZM761.56 396V395.66H772.70V396ZM772.70 396V395.66H783.84V396ZM783.84 396V395.66H794.98V396ZM794.98 396V389.25H806.12V396ZM806.12 396V390.32H817.26V396ZM817.26 396V377.51H828.40V396ZM828.40 396V387.12H839.54V396ZM839.54 396V395.66H850.68V396ZM850.68 396V388.18H861.82V396ZM861.82 396V387.12H872.97V396ZM872.97 396V390.32H884.11V396ZM884.11 396V390.75H895.25V396ZM895.25 396V393.52H906.39V396ZM906.39 396V395.66H917.53V396ZM917.53 396V395.66H928.67V396ZM928.67 396V395.66H939.81V396ZM939.81 396V394.16H950.95V396ZM950.95 396V389.25H962.09V396ZM962.09 396V380.71H973.24V396ZM973.24 396V385.41H984.38V396ZM984.38 396V393.52H995.52V396ZM995.52 396V394.16H1006.66V396ZM1006.66 396V377.93H1017.80V396ZM1017.80 396V389.89H1028.94V396ZM1028.94 396V394.16H1040.08V396ZM1040.08 396V393.52H1051.22V396ZM1051.22 396V393.52H1062.36V396ZM1062.36 396V391.39H1073.50V396ZM1073.50 396V392.46H1084.64V396ZM1084.64 396V388.18H1095.79V396ZM1095.79 396V394.59H1106.93V396ZM1106.93 396V390.32H1118.07V396ZM1118.07 396V383.91H1129.21V396ZM1129.21 396V393.52H1140.35V396ZM1140.35 396V395.66H1151.49V396ZM1151.49 396V389.25H1162.63V396ZM1162.63 396V392.46H1173.77V396ZM1173.77 396V386.05H1184.91V396ZM1184.91 396V394.59H1196.06V396ZM1196.06 396V390.75H1207.20V396ZM1207.20 396V388.18H1218.34V396ZM1218.34 396V393.52H1229.48V396ZM1229.48 396V394.59H1240.62V396ZM1240.62 396V391.39H1251.76V396ZM1251.76 396V393.52H1262.90V396ZM1262.90 396V392.88H1274.04V396ZM1274.04 396V395.66H1285.18V396ZM1285.18 396V395.66H1296.32V396ZM1296.32 396V395.66H1307.47V396ZM1307.47 396V395.66H1318.61V396ZM1318.61 396V395.66H1329.75V396ZM1329.75 396V395.66H1340.89V396ZM1340.89 396V395.66H1352.03V396ZM1352.03 396V395.66H1363.17V396ZM1363.17 396V390.75H1374.31V396ZM1374.31 396V369.39H1385.45V396ZM1385.45 396V390.32H1396.59V396ZM1396.59 396V393.52H1407.73V396ZM1407.73 396V390.75H1418.88V396ZM1418.88 396V395.02H1430.02V396ZM1430.02 396V388.18H1441.16V396ZM1441.16 396V388.18H1452.30V396ZM1452.30 396V380.71H1463.44V396ZM1463.44 396V381.35H1474.58V396ZM1474.58 396V393.52H1485.72V396ZM1485.72 396V395.66H1496.86V396ZM1496.86 396V393.52H1508.00V396ZM1508.00 396V382.21H1519.14V396ZM1519.14 396V388.18H1530.29V396ZM1530.29 396V383.91H1541.43V396ZM1541.43 396V383.91H1552.57V396ZM1552.57 396V395.66H1563.71V396ZM1563.71 396V394.59H1574.85V396ZM1574.85 396V395.66H1585.99V396ZM1585.99 396V390.75H1597.13V396ZM1597.13 396V383.91H1608.27V396ZM1608.27 396V379.64H1619.41V396ZM1619.41 396V395.66H1630.55V396ZM1630.55 396V390.75H1641.70V396ZM1641.70 396V379.22H1652.84V396ZM1652.84 396V385.62H1663.98V396ZM1663.98 396V379.22H1675.12V396ZM1675.12 396V395.66H1686.26V396ZM1686.26 396V395.66H1697.40V396ZM1697.40 396V395.66H1708.54V396ZM1708.54 396V395.66H1719.68V396ZM1719.68 396V390.75H1730.82V396ZM1730.82 396V380.71H1741.96V396Z" fill="#4f78c4"/><path d="M315.92 384.98V366.83H327.06V384.98ZM583.30 395.66V377.08H594.44V395.66ZM817.26 377.51V355.09H828.40V377.51ZM828.40 387.12V237.00H839.54V387.12ZM850.68 388.18V374.95H861.82V388.18ZM861.82 387.12V354.02H872.97V387.12ZM1385.45 390.32V371.53H1396.59V390.32ZM1652.84 385.62V366.83H1663.98V385.62Z" fill="#f5a11b"/><polyline points="137.66,391.39 148.80,372.17 159.94,391.39 171.08,388.18 182.22,383.27 193.37,392.46 204.51,390.32 215.65,388.18 226.79,383.91 237.93,372.17 249.07,389.25 260.21,393.52 271.35,395.02 282.49,390.75 293.63,387.12 304.77,388.18 315.92,382.42 327.06,390.75 338.20,389.25 349.34,390.32 360.48,391.39 371.62,392.03 382.76,380.28 393.90,394.59 405.04,389.25 416.18,393.52 427.33,387.12 438.47,391.39 449.61,373.24 460.75,390.96 471.89,380.71 483.03,388.61 494.17,394.59 505.31,393.52 516.45,394.59 527.60,392.46 538.74,382.42 549.88,391.39 561.02,377.51 572.16,384.98 583.30,388.18 594.44,391.81 605.58,392.88 616.72,392.46 627.86,388.18 639.00,391.39 650.15,386.48 661.29,384.98 672.43,394.59 683.57,390.32 694.71,391.39 705.85,383.91 716.99,379.22 728.13,394.59 739.27,386.69 750.41,384.98 761.56,395.66 772.70,390.32 783.84,391.39 794.98,384.98 806.12,391.39 817.26,388.18 828.40,344.41 839.54,384.98 850.68,391.39 861.82,377.08 872.97,385.62 884.11,381.78 895.25,390.32 906.39,395.02 917.53,388.18 928.67,390.75 939.81,395.02 950.95,376.65 962.09,324.12 973.24,389.89 984.38,379.43 995.52,371.10 1006.66,381.78 1017.80,392.67 1028.94,381.78 1040.08,372.60 1051.22,383.91 1062.36,389.25 1073.50,386.05 1084.64,381.78 1095.79,388.18 1106.93,391.39 1118.07,383.91 1129.21,377.51 1140.35,388.18 1151.49,392.46 1162.63,386.05 1173.77,379.64 1184.91,389.25 1196.06,391.39 1207.20,384.98 1218.34,381.78 1229.48,388.18 1240.62,390.32 1251.76,388.18 1262.90,387.12 1274.04,384.34 1285.18,382.42 1296.32,390.32 1307.47,394.59 1318.61,392.46 1329.75,384.98 1340.89,372.81 1352.03,368.54 1363.17,383.49 1374.31,386.69 1385.45,383.49 1396.59,389.25 1407.73,394.16 1418.88,384.98 1430.02,390.32 1441.16,390.75 1452.30,389.25 1463.44,387.12 1474.58,384.98 1485.72,389.25 1496.86,393.52 1508.00,382.85 1519.14,376.44 1530.29,395.66 1541.43,395.66 1552.57,383.91 1563.71,387.12 1574.85,390.32 1585.99,394.59 1597.13,389.68 1608.27,394.59 1619.41,395.66 1630.55,390.75 1641.70,389.89 1652.84,366.83 1663.98,371.10 1675.12,392.03 1686.26,378.58 1697.40,392.46 1708.54,388.18 1719.68,393.52 1730.82,395.66 1741.96,388.18" fill="none" stroke="#7c7c7c" stroke-width="1.2"/><path d="M137.66 392.46H148.80V392.03H159.94V392.46H171.08V393.52H182.22V393.52H193.37V393.52H204.51V392.46H215.65V392.46H226.79V390.75H237.93V391.39H249.07V387.54H260.21V381.35H271.35V394.16H282.49V374.95H293.63V381.35H304.77V390.32H315.92V390.75H327.06V394.16H338.20V392.88H349.34V394.16H360.48V387.12H371.62V392.46H382.76V383.91H393.90V373.24H405.04V378.58H416.18V371.53H427.33V387.76H438.47V391.39H449.61V394.59H460.75V390.75H471.89V389.89H483.03V392.46H494.17V393.52H505.31V390.75H516.45V391.39H527.60V393.52H538.74V393.52H549.88V381.35H561.02V389.25H572.16V392.46H583.30V393.52H594.44V393.52H605.58V392.46H616.72V383.91H627.86V390.32H639.00V392.46H650.15V392.46H661.29V393.52H672.43V393.52H683.57V389.89H694.71V391.39H705.85V392.03H716.99V392.03H728.13V392.03H739.27V393.52H750.41V393.52H761.56V393.52H772.70V392.46H783.84V391.39H794.98V390.32H806.12V389.25H817.26V383.91H828.40V389.25H839.54V390.32H850.68V391.39H861.82V380.07H872.97V390.75H884.11V392.03H895.25V393.52H906.39V393.52H917.53V390.75H928.67V392.03H939.81V376.44H950.95V389.25H962.09V389.25H973.24V390.75H984.38V391.39H995.52V393.52H1006.66V392.03H1017.80V384.98H1028.94V390.75H1040.08V392.03H1051.22V391.39H1062.36V390.32H1073.50V389.25H1084.64V391.39H1095.79V392.46H1106.93V388.18H1118.07V391.39H1129.21V393.52H1140.35V390.32H1151.49V389.25H1162.63V391.39H1173.77V392.46H1184.91V388.18H1196.06V390.75H1207.20V392.03H1218.34V389.25H1229.48V391.39H1240.62V390.75H1251.76V390.32H1262.90V390.32H1274.04V391.39H1285.18V392.88H1296.32V392.46H1307.47V392.88H1318.61V392.88H1329.75V391.39H1340.89V392.88H1352.03V378.15H1363.17V386.05H1374.31V377.51H1385.45V390.75H1396.59V315.58H1407.73V283.55H1418.88V306.61H1430.02V353.38H1441.16V391.39H1452.30V390.32H1463.44V391.39H1474.58V393.52H1485.72V393.52H1496.86V385.62H1508.00V382.85H1519.14V385.62H1530.29V381.78H1541.43V384.98H1552.57V392.03H1563.71V392.46H1574.85V390.75H1585.99V377.08H1597.13V368.54H1608.27V377.51H1619.41V378.15H1630.55V390.75H1641.70V390.75H1652.84V378.58H1663.98V363.20H1675.12V393.52H1686.26V394.16H1697.40V393.52H1708.54V392.03H1719.68V384.98H1730.82V363.63H1741.96" fill="none" stroke="#5ef35c" stroke-width="1.6"/><path d="M137.66 294.87H148.80V269.67H159.94V355.09H171.08V357.22H182.22V359.36H193.37V342.91H204.51V357.22H215.65V326.69H226.79V327.33H237.93V288.46H249.07V280.56H260.21V318.14H271.35V326.69H282.49V330.10H293.63V321.99H304.77V286.75H315.92V292.09H327.06V361.07H338.20V335.87H349.34V328.39H360.48V344.41H371.62V304.48H382.76V308.11H393.90V305.55H405.04V319.85H416.18V306.61H427.33V325.83H438.47V312.59H449.61V370.03H460.75V352.31H471.89V356.79H483.03V355.73H494.17V358.29H505.31V331.60H516.45V319.43H527.60V347.19H538.74V302.77H549.88V319.43H561.02V349.32H572.16V343.34H583.30V336.51H594.44V351.88H605.58V340.14H616.72V299.57H627.86V283.12H639.00V292.09H650.15V346.97H661.29V351.24H672.43V283.12H683.57V270.74H694.71V336.29H705.85V328.39H716.99V281.42H728.13V266.04H739.27V359.78H750.41V311.95H761.56V325.19H772.70V341.21H783.84V362.56H794.98V323.06H806.12V302.13H817.26V349.32H828.40V345.48H839.54V261.77H850.68V330.96H861.82V267.11H872.97V270.74H884.11V318.78H895.25V354.02H906.39V345.48H917.53V332.66H928.67V315.58H939.81V343.34H950.95V324.12H962.09V307.04H973.24V332.66H984.38V345.48H995.52V319.85H1006.66V328.39H1017.80V343.34H1028.94V315.58H1040.08V324.12H1051.22V345.48H1062.36V334.80H1073.50V324.12H1084.64V311.31H1095.79V336.94H1106.93V345.48H1118.07V319.85H1129.21V307.04H1140.35V332.66H1151.49V345.48H1162.63V324.12H1173.77V315.58H1184.91V341.21H1196.06V349.75H1207.20V326.26H1218.34V315.58H1229.48V332.66H1240.62V345.48H1251.76V336.94H1262.90V286.33H1274.04V357.65H1285.18V329.89H1296.32V357.65H1307.47V339.50H1318.61V351.88H1329.75V351.24H1340.89V331.60H1352.03V349.75H1363.17V326.26H1374.31V294.65H1385.45V301.70H1396.59V267.96H1407.73V258.99H1418.88V290.60H1430.02V307.47H1441.16V341.21H1452.30V341.21H1463.44V298.07H1474.58V346.12H1485.72V348.68H1496.86V330.96H1508.00V313.02H1519.14V329.46H1530.29V297.00H1541.43V285.69H1552.57V345.05H1563.71V320.28H1574.85V310.67H1585.99V320.92H1597.13V270.31H1608.27V268.18H1619.41V353.38H1630.55V318.36H1641.70V297.86H1652.84V297.00H1663.98V288.25H1675.12V351.46H1686.26V337.36H1697.40V351.24H1708.54V346.76H1719.68V291.02H1730.82V285.26H1741.96" fill="none" stroke="#a4421c" stroke-width="1.35"/><path d="M137.66 372.17H148.80V353.59H159.94V346.54H171.08V351.88H182.22V350.17H193.37V316.01H204.51V367.47H215.65V307.47H226.79V339.71H237.93V351.24H249.07V377.08H260.21V370.03H271.35V342.91H282.49V367.26H293.63V372.60H304.77V360.42H315.92V372.17H327.06V258.99H338.20V284.62H349.34V274.37H360.48V347.19H371.62V351.88H382.76V360.85H393.90V351.46H405.04V335.87H416.18V335.44H427.33V371.10H438.47V371.10H449.61V361.49H460.75V346.97H471.89V351.88H483.03V294.87H494.17V348.04H505.31V360.42H516.45V368.97H527.60V346.76H538.74V367.90H549.88V371.53H561.02V384.98H572.16V339.07H583.30V345.48H594.44V323.48H605.58V351.88H616.72V360.85H627.86V375.37H639.00V359.36H650.15V338.43H661.29V345.05H672.43V351.46H683.57V362.99H694.71V340.78H705.85V336.29H716.99V365.34H728.13V367.47H739.27V359.36H750.41V304.48H761.56V344.41H772.70V333.31H783.84V356.15H794.98V335.87H806.12V371.10H817.26V372.81H828.40V385.62H839.54V371.53H850.68V368.54H861.82V354.02H872.97V371.10H884.11V360.42H895.25V342.91H906.39V345.48H917.53V379.22H928.67V355.73H939.81V343.34H950.95V377.08H962.09V355.09H973.24V359.36H984.38V345.48H995.52V349.75H1006.66V355.09H1017.80V343.34H1028.94V349.75H1040.08V355.09H1051.22V372.81H1062.36V358.29H1073.50V354.02H1084.64V345.48H1095.79V362.56H1106.93V332.66H1118.07V349.75H1129.21V366.83H1140.35V343.34H1151.49V358.29H1162.63V349.75H1173.77V334.80H1184.91V366.83H1196.06V345.48H1207.20V358.29H1218.34V349.75H1229.48V332.66H1240.62V345.48H1251.76V358.29H1262.90V355.73H1274.04V329.89H1285.18V263.91H1296.32V340.14H1307.47V308.11H1318.61V344.41H1329.75V334.37H1340.89V356.15H1352.03V336.51H1363.17V367.90H1374.31V356.15H1385.45V367.47H1396.59V348.68H1407.73V335.23H1418.88V342.27H1430.02V377.08H1441.16V367.47H1452.30V376.01H1463.44V364.27H1474.58V335.23H1485.72V348.04H1496.86V368.97H1508.00V366.40H1519.14V356.79H1530.29V373.88H1541.43V372.17H1552.57V318.36H1563.71V331.17H1574.85V345.05H1585.99V373.66H1597.13V360.42H1608.27V375.80H1619.41V344.41H1630.55V349.32H1641.70V376.44H1652.84V379.00H1663.98V366.19H1675.12V337.36H1686.26V236.57H1697.40V363.20H1708.54V317.72H1719.68V359.36H1730.82V375.80H1741.96" fill="none" stroke="#222" stroke-width="1.45"/><rect x="783.8" y="197" width="134" height="199" fill="rgba(0,0,0,0.28)" stroke="#7a7a7a" stroke-width="1"/><rect x="136.5" y="196.5" width="1607" height="200" fill="none" stroke="#4a4a4a" stroke-width="1.8"/><line x1="1745" x2="1750" y1="219.6" y2="219.6" stroke="#aaa" stroke-width="1"/><line x1="1745" x2="1750" y1="264.4" y2="264.4" stroke="#aaa" stroke-width="1"/><line x1="1745" x2="1750" y1="308.6" y2="308.6" stroke="#aaa" stroke-width="1"/><line x1="1745" x2="1750" y1="352.6" y2="352.6" stroke="#aaa" stroke-width="1"/><line x1="1745" x2="1750" y1="396.6" y2="396.6" stroke="#aaa" stroke-width="1"/></svg><div class="t" style="left:201.9px;top:126.4px;font-size:10.5px;font-weight:normal;color:#3a3a3a;transform:scaleX(0.9991) translateX(-50%);transform-origin:0 0;">4.4.</div><div class="t" style="left:316.5px;top:126.4px;font-size:10.5px;font-weight:normal;color:#3a3a3a;transform:scaleX(0.9991) translateX(-50%);transform-origin:0 0;">5.4.</div><div class="t" style="left:431.1px;top:126.4px;font-size:10.5px;font-weight:normal;color:#3a3a3a;transform:scaleX(0.9991) translateX(-50%);transform-origin:0 0;">6.4.</div><div class="t" style="left:545.6999999999999px;top:126.4px;font-size:10.5px;font-weight:normal;color:#3a3a3a;transform:scaleX(0.9991) translateX(-50%);transform-origin:0 0;">7.4.</div><div class="t" style="left:660.3px;top:126.4px;font-size:10.5px;font-weight:normal;color:#3a3a3a;transform:scaleX(0.9991) translateX(-50%);transform-origin:0 0;">8.4.</div><div class="t" style="left:774.9px;top:126.4px;font-size:10.5px;font-weight:normal;color:#3a3a3a;transform:scaleX(0.9991) translateX(-50%);transform-origin:0 0;">9.4.</div><div class="t" style="left:889.4999999999999px;top:126.4px;font-size:10.5px;font-weight:normal;color:#3a3a3a;transform:scaleX(0.9632) translateX(-50%);transform-origin:0 0;">10.4.</div><div class="t" style="left:1004.0999999999999px;top:126.4px;font-size:10.5px;font-weight:normal;color:#3a3a3a;transform:scaleX(0.9965) translateX(-50%);transform-origin:0 0;">11.4.</div><div class="t" style="left:1118.7px;top:126.4px;font-size:10.5px;font-weight:normal;color:#3a3a3a;transform:scaleX(0.9632) translateX(-50%);transform-origin:0 0;">12.4.</div><div class="t" style="left:1233.3px;top:126.4px;font-size:10.5px;font-weight:normal;color:#3a3a3a;transform:scaleX(0.9632) translateX(-50%);transform-origin:0 0;">13.4.</div><div class="t" style="left:1347.9px;top:126.4px;font-size:10.5px;font-weight:normal;color:#3a3a3a;transform:scaleX(0.9632) translateX(-50%);transform-origin:0 0;">14.4.</div><div class="t" style="left:1462.5px;top:126.4px;font-size:10.5px;font-weight:normal;color:#3a3a3a;transform:scaleX(0.9632) translateX(-50%);transform-origin:0 0;">15.4.</div><div class="t" style="left:1577.1px;top:126.4px;font-size:10.5px;font-weight:normal;color:#3a3a3a;transform:scaleX(0.9632) translateX(-50%);transform-origin:0 0;">16.4.</div><div class="t" style="left:1691.7px;top:126.4px;font-size:10.5px;font-weight:normal;color:#3a3a3a;transform:scaleX(0.9632) translateX(-50%);transform-origin:0 0;">17.4.</div><div class="t" style="right:1788.5px;top:139.2px;font-size:10.5px;font-weight:normal;color:#3a3a3a;transform:scaleX(1.0067);transform-origin:100% 0;">20 M</div><div class="t" style="right:1788.5px;top:151.1px;font-size:10.5px;font-weight:normal;color:#3a3a3a;transform:scaleX(1.0067);transform-origin:100% 0;">15 M</div><div class="t" style="right:1788.5px;top:162.9px;font-size:10.5px;font-weight:normal;color:#3a3a3a;transform:scaleX(1.0067);transform-origin:100% 0;">10 M</div><div class="t" style="right:1788.5px;top:174.7px;font-size:10.5px;font-weight:normal;color:#3a3a3a;transform:scaleX(1.0562);transform-origin:100% 0;">5 M</div><div class="t" style="right:1788.5px;top:186.1px;font-size:10.5px;font-weight:normal;color:#3a3a3a;transform:scaleX(0.9412);transform-origin:100% 0;">0</div><div class="t" style="right:1788.5px;top:203.2px;font-size:10.5px;font-weight:normal;color:#3a3a3a;transform:scaleX(1.0067);transform-origin:100% 0;">70 M</div><div class="t" style="right:1788.5px;top:230.1px;font-size:10.5px;font-weight:normal;color:#3a3a3a;transform:scaleX(1.0067);transform-origin:100% 0;">60 M</div><div class="t" style="right:1788.5px;top:257.1px;font-size:10.5px;font-weight:normal;color:#3a3a3a;transform:scaleX(1.0067);transform-origin:100% 0;">50 M</div><div class="t" style="right:1788.5px;top:283.7px;font-size:10.5px;font-weight:normal;color:#3a3a3a;transform:scaleX(1.0067);transform-origin:100% 0;">40 M</div><div class="t" style="right:1788.5px;top:310.7px;font-size:10.5px;font-weight:normal;color:#3a3a3a;transform:scaleX(1.0067);transform-origin:100% 0;">30 M</div><div class="t" style="right:1788.5px;top:337.5px;font-size:10.5px;font-weight:normal;color:#3a3a3a;transform:scaleX(1.0067);transform-origin:100% 0;">20 M</div><div class="t" style="right:1788.5px;top:364.2px;font-size:10.5px;font-weight:normal;color:#3a3a3a;transform:scaleX(1.0067);transform-origin:100% 0;">10 M</div><div class="t" style="right:1788.5px;top:391.1px;font-size:10.5px;font-weight:normal;color:#3a3a3a;transform:scaleX(0.9412);transform-origin:100% 0;">0</div><div class="t" style="left:1752.5px;top:214.5px;font-size:10.5px;font-weight:normal;color:#3a3a3a;transform:scaleX(0.9632);transform-origin:0 0;">2 s</div><div class="t" style="left:1752.5px;top:259.3px;font-size:10.5px;font-weight:normal;color:#3a3a3a;transform:scaleX(0.9883);transform-origin:0 0;">1.5 s</div><div class="t" style="left:1752.5px;top:303.5px;font-size:10.5px;font-weight:normal;color:#3a3a3a;transform:scaleX(0.9632);transform-origin:0 0;">1 s</div><div class="t" style="left:1752.5px;top:347.5px;font-size:10.5px;font-weight:normal;color:#3a3a3a;transform:scaleX(1.0105);transform-origin:0 0;">500 ms</div><div class="t" style="left:1752.5px;top:391.5px;font-size:10.5px;font-weight:normal;color:#3a3a3a;transform:scaleX(0.9221);transform-origin:0 0;">0 μs</div><div class="t" style="left:136px;top:403.1px;font-size:10.5px;font-weight:normal;color:#3a3a3a;transform:scaleX(1.0020);transform-origin:0 0;">Apr 12</div><div class="t" style="left:282.493px;top:403.1px;font-size:10.5px;font-weight:normal;color:#3a3a3a;transform:scaleX(0.9688) translateX(-50%);transform-origin:0 0;">3:00</div><div class="t" style="left:416.18499999999995px;top:403.1px;font-size:10.5px;font-weight:normal;color:#3a3a3a;transform:scaleX(0.9688) translateX(-50%);transform-origin:0 0;">4:00</div><div class="t" style="left:549.877px;top:403.1px;font-size:10.5px;font-weight:normal;color:#3a3a3a;transform:scaleX(0.9688) translateX(-50%);transform-origin:0 0;">5:00</div><div class="t" style="left:683.569px;top:403.1px;font-size:10.5px;font-weight:normal;color:#3a3a3a;transform:scaleX(0.9688) translateX(-50%);transform-origin:0 0;">6:00</div><div class="t" style="left:817.261px;top:403.1px;font-size:10.5px;font-weight:normal;color:#3a3a3a;transform:scaleX(0.9688) translateX(-50%);transform-origin:0 0;">7:00</div><div class="t" style="left:950.953px;top:403.1px;font-size:10.5px;font-weight:normal;color:#3a3a3a;transform:scaleX(0.9688) translateX(-50%);transform-origin:0 0;">8:00</div><div class="t" style="left:1084.645px;top:403.1px;font-size:10.5px;font-weight:normal;color:#3a3a3a;transform:scaleX(0.9688) translateX(-50%);transform-origin:0 0;">9:00</div><div class="t" style="left:1218.337px;top:403.1px;font-size:10.5px;font-weight:normal;color:#3a3a3a;transform:scaleX(0.9436) translateX(-50%);transform-origin:0 0;">10:00</div><div class="t" style="left:1352.029px;top:403.1px;font-size:10.5px;font-weight:normal;color:#3a3a3a;transform:scaleX(0.9725) translateX(-50%);transform-origin:0 0;">11:00</div><div class="t" style="left:1485.721px;top:403.1px;font-size:10.5px;font-weight:normal;color:#3a3a3a;transform:scaleX(0.9436) translateX(-50%);transform-origin:0 0;">12:00</div><div class="t" style="right:178px;top:403.1px;font-size:10.5px;font-weight:normal;color:#3a3a3a;transform:scaleX(0.9962);transform-origin:100% 0;">Apr 12 2025</div><div class="t" style="font-size:13px;color:#444;transform:rotate(-90deg) scaleX(1.08);transform-origin:0 0;left:79.6px;top:323.4px">bits/s</div><div class="a" style="left:1808px;top:142px;width:69px;height:40px;background:#fff;border-radius:4px;box-shadow:0 2px 6px rgba(0,0,0,.22);overflow:hidden"><svg style="left:0;top:0" width="69" height="40" viewBox="0 0 69 40"><path d="M0.00 40V39.20H2.76V40ZM2.76 40V36.60H5.52V40ZM5.52 40V38.70H8.28V40ZM8.28 40V24.00H11.04V40ZM11.04 40V30.10H13.80V40ZM13.80 40V37.40H16.56V40ZM16.56 40V35.00H19.32V40ZM19.32 40V36.30H22.08V40ZM22.08 40V33.50H24.84V40ZM24.84 40V37.10H27.60V40ZM27.60 40V36.10H30.36V40ZM30.36 40V34.20H33.12V40ZM33.12 40V39.00H35.88V40ZM35.88 40V34.00H38.64V40ZM38.64 40V37.40H41.40V40ZM41.40 40V34.20H44.16V40ZM44.16 40V35.30H46.92V40ZM46.92 40V38.40H49.68V40ZM49.68 40V39.70H52.44V40ZM52.44 40V34.80H55.20V40ZM55.20 40V34.50H57.96V40ZM57.96 40V34.20H60.72V40ZM60.72 40V35.50H63.48V40ZM63.48 40V34.20H66.24V40ZM66.24 40V36.30H69.00V40Z" fill="#4f78c4"/><path d="M8.28 24.00V21.90H11.04V24.00ZM19.32 36.30V34.50H22.08V36.30ZM30.36 34.20V8.30H33.12V34.20ZM41.40 34.20V31.30H44.16V34.20ZM52.44 34.80V32.40H55.20V34.80ZM63.48 34.20V32.10H66.24V34.20Z" fill="#f5a11b"/></svg></div><div class="a" style="left:1808px;top:198px;width:69px;height:22px;background:#0c1f5a;border-radius:11px"></div><div class="t" style="left:1842.5px;top:203.2px;font-size:12px;font-weight:bold;color:#fff;transform:scaleX(0.8607) translateX(-50%);transform-origin:0 0;">Traffic</div><div class="a" style="left:1808px;top:250px;width:69px;height:40px;background:#fff;border-radius:4px;box-shadow:0 2px 6px rgba(0,0,0,.22);overflow:hidden"><svg style="left:0;top:0" width="69" height="40" viewBox="0 0 69 40"><path d="M0.00 40V38.70H2.76V40ZM2.76 40V36.10H5.52V40ZM5.52 40V37.10H8.28V40ZM8.28 40V23.50H11.04V40ZM11.04 40V29.80H13.80V40ZM13.80 40V34.80H16.56V40ZM16.56 40V34.50H19.32V40ZM19.32 40V34.20H22.08V40ZM22.08 40V32.90H24.84V40ZM24.84 40V35.30H27.60V40ZM27.60 40V35.80H30.36V40ZM30.36 40V30.30H33.12V40ZM33.12 40V38.20H35.88V40ZM35.88 40V31.10H38.64V40ZM38.64 40V35.30H41.40V40ZM41.40 40V30.80H44.16V40ZM44.16 40V32.90H46.92V40ZM46.92 40V36.30H49.68V40ZM49.68 40V39.00H52.44V40ZM52.44 40V31.60H55.20V40ZM55.20 40V32.10H57.96V40ZM57.96 40V31.10H60.72V40ZM60.72 40V34.20H63.48V40ZM63.48 40V31.60H66.24V40ZM66.24 40V34.80H69.00V40Z" fill="#9ab0dc"/><path d="M8.28 23.50V20.90H11.04V23.50ZM19.32 34.20V31.80H22.08V34.20ZM30.36 30.30V8.30H33.12V30.30ZM41.40 30.80V28.20H44.16V30.80ZM52.44 31.60V29.00H55.20V31.60ZM63.48 31.60V29.00H66.24V31.60Z" fill="#f8c98a"/></svg></div><div class="t" style="left:1842.5px;top:312.2px;font-size:12px;font-weight:bold;color:#111;transform:scaleX(0.8375) translateX(-50%);transform-origin:0 0;">Packets</div><div class="a" style="left:1808px;top:358px;width:69px;height:40px;background:#fff;border-radius:4px;box-shadow:0 2px 6px rgba(0,0,0,.22);overflow:hidden"><svg style="left:0;top:0" width="69" height="40" viewBox="0 0 69 40"><path d="M0.00 40V30.10H2.76V40ZM2.76 40V30.90H5.52V40ZM5.52 40V27.20H8.28V40ZM8.28 40V25.60H11.04V40ZM11.04 40V27.40H13.80V40ZM13.80 40V23.80H16.56V40ZM16.56 40V29.50H19.32V40ZM19.32 40V27.20H22.08V40ZM22.08 40V25.10H24.84V40ZM24.84 40V26.10H27.60V40ZM27.60 40V29.00H30.36V40ZM30.36 40V19.30H33.12V40ZM33.12 40V26.60H35.88V40ZM35.88 40V22.70H38.64V40ZM38.64 40V24.60H41.40V40ZM41.40 40V17.70H44.16V40ZM44.16 40V18.30H46.92V40ZM46.92 40V27.70H49.68V40ZM49.68 40V32.90H52.44V40ZM52.44 40V21.90H55.20V40ZM55.20 40V15.40H57.96V40ZM57.96 40V21.70H60.72V40ZM60.72 40V26.10H63.48V40ZM63.48 40V21.90H66.24V40ZM66.24 40V26.10H69.00V40Z" fill="#9ab0dc"/><path d="M8.28 25.60V22.50H11.04V25.60ZM19.32 27.20V24.60H22.08V27.20ZM30.36 19.30V8.30H33.12V19.30ZM41.40 17.70V15.10H44.16V17.70ZM52.44 21.90V18.80H55.20V21.90ZM63.48 21.90V18.80H66.24V21.90Z" fill="#f8c98a"/></svg></div><div class="t" style="left:1842.5px;top:420.2px;font-size:12px;font-weight:bold;color:#111;transform:scaleX(0.8232) translateX(-50%);transform-origin:0 0;">Flows</div><div class="a" style="left:137px;top:444px;width:69px;height:40px;background:#fff;border-radius:4px;box-shadow:0 2px 6px rgba(0,0,0,.22);overflow:hidden"><svg style="left:0;top:0" width="69" height="40" viewBox="0 0 69 40"><path d="M0.00 40V39.20H2.76V40ZM2.76 40V36.60H5.52V40ZM5.52 40V38.70H8.28V40ZM8.28 40V24.00H11.04V40ZM11.04 40V30.10H13.80V40ZM13.80 40V37.40H16.56V40ZM16.56 40V35.00H19.32V40ZM19.32 40V36.30H22.08V40ZM22.08 40V33.50H24.84V40ZM24.84 40V37.10H27.60V40ZM27.60 40V36.10H30.36V40ZM30.36 40V34.20H33.12V40ZM33.12 40V39.00H35.88V40ZM35.88 40V34.00H38.64V40ZM38.64 40V37.40H41.40V40ZM41.40 40V34.20H44.16V40ZM44.16 40V35.30H46.92V40ZM46.92 40V38.40H49.68V40ZM49.68 40V39.70H52.44V40ZM52.44 40V34.80H55.20V40ZM55.20 40V34.50H57.96V40ZM57.96 40V34.20H60.72V40ZM60.72 40V35.50H63.48V40ZM63.48 40V34.20H66.24V40ZM66.24 40V36.30H69.00V40Z" fill="#4f78c4"/><path d="M8.28 24.00V21.90H11.04V24.00ZM19.32 36.30V34.50H22.08V36.30ZM30.36 34.20V8.30H33.12V34.20ZM41.40 34.20V31.30H44.16V34.20ZM52.44 34.80V32.40H55.20V34.80ZM63.48 34.20V32.10H66.24V34.20Z" fill="#f5a11b"/></svg></div><div class="a" style="left:137px;top:496px;width:69px;height:23px;background:#0c1f5a;border-radius:11.5px"></div><div class="t" style="left:171.5px;top:501.8px;font-size:12px;font-weight:bold;color:#fff;transform:scaleX(0.8798) translateX(-50%);transform-origin:0 0;">All</div><div class="a" style="left:246px;top:444px;width:69px;height:40px;background:#fff;border-radius:4px;box-shadow:0 2px 6px rgba(0,0,0,.22);overflow:hidden"><svg style="left:0;top:0" width="69" height="40" viewBox="0 0 69 40"><path d="M0.00 40V39.50H2.76V40ZM2.76 40V36.90H5.52V40ZM5.52 40V38.70H8.28V40ZM8.28 40V22.70H11.04V40ZM11.04 40V29.30H13.80V40ZM13.80 40V37.40H16.56V40ZM16.56 40V34.50H19.32V40ZM19.32 40V36.90H22.08V40ZM22.08 40V33.20H24.84V40ZM24.84 40V37.40H27.60V40ZM27.60 40V35.50H30.36V40ZM30.36 40V34.50H33.12V40ZM33.12 40V39.00H35.88V40ZM35.88 40V34.20H38.64V40ZM38.64 40V37.90H41.40V40ZM41.40 40V34.20H44.16V40ZM44.16 40V35.50H46.92V40ZM46.92 40V38.40H49.68V40ZM49.68 40V39.70H52.44V40ZM52.44 40V35.00H55.20V40ZM55.20 40V34.50H57.96V40ZM57.96 40V34.00H60.72V40ZM60.72 40V35.50H63.48V40ZM63.48 40V34.80H66.24V40ZM66.24 40V36.30H69.00V40Z" fill="#9ab0dc"/><path d="M30.36 34.50V8.10H33.12V34.50ZM41.40 34.20V33.80H44.16V34.20ZM52.44 35.00V34.60H55.20V35.00ZM63.48 34.80V34.40H66.24V34.80Z" fill="#f8c98a"/></svg></div><div class="t" style="left:280.5px;top:501.8px;font-size:12px;font-weight:bold;color:#111;transform:scaleX(0.8750) translateX(-50%);transform-origin:0 0;">TCP</div><div class="a" style="left:354px;top:444px;width:69px;height:40px;background:#fff;border-radius:4px;box-shadow:0 2px 6px rgba(0,0,0,.22);overflow:hidden"><svg style="left:0;top:0" width="69" height="40" viewBox="0 0 69 40"><path d="M0.00 40V39.20H2.76V40ZM2.76 40V37.60H5.52V40ZM5.52 40V33.20H8.28V40ZM8.28 40V36.10H11.04V40ZM11.04 40V38.20H13.80V40ZM13.80 40V34.50H16.56V40ZM16.56 40V39.50H19.32V40ZM19.32 40V37.40H22.08V40ZM22.08 40V38.70H24.84V40ZM24.84 40V33.00H27.60V40ZM27.60 40V37.60H30.36V40ZM30.36 40V31.60H33.12V40ZM33.12 40V39.00H35.88V40ZM35.88 40V29.30H38.64V40ZM38.64 40V30.80H41.40V40ZM41.40 40V29.50H44.16V40ZM44.16 40V32.10H46.92V40ZM46.92 40V36.10H49.68V40ZM49.68 40V39.50H52.44V40ZM52.44 40V32.10H55.20V40ZM55.20 40V33.00H57.96V40ZM57.96 40V34.00H60.72V40ZM60.72 40V36.90H63.48V40ZM63.48 40V28.20H66.24V40ZM66.24 40V36.60H69.00V40Z" fill="#9ab0dc"/><path d="M8.28 36.10V15.70H11.04V36.10ZM19.32 37.40V17.00H22.08V37.40ZM30.36 31.60V11.50H33.12V31.60ZM41.40 29.50V9.40H44.16V29.50ZM52.44 32.10V11.70H55.20V32.10ZM63.48 28.20V8.30H66.24V28.20Z" fill="#f8c98a"/></svg></div><div class="t" style="left:388.5px;top:501.8px;font-size:12px;font-weight:bold;color:#111;transform:scaleX(0.9470) translateX(-50%);transform-origin:0 0;">UDP</div><div class="a" style="left:463px;top:444px;width:69px;height:40px;background:#fff;border-radius:4px;box-shadow:0 2px 6px rgba(0,0,0,.22);overflow:hidden"><svg style="left:0;top:0" width="69" height="40" viewBox="0 0 69 40"><path d="M0.00 40V38.80H2.76V40ZM2.76 40V38.80H5.52V40ZM5.52 40V38.80H8.28V40ZM8.28 40V38.80H11.04V40ZM11.04 40V38.80H13.80V40ZM13.80 40V38.80H16.56V40ZM16.56 40V38.80H19.32V40ZM19.32 40V38.80H22.08V40ZM22.08 40V38.80H24.84V40ZM24.84 40V38.80H27.60V40ZM27.60 40V38.80H30.36V40ZM30.36 40V38.80H33.12V40ZM33.12 40V38.80H35.88V40ZM35.88 40V38.80H38.64V40ZM38.64 40V38.80H41.40V40ZM41.40 40V38.80H44.16V40ZM44.16 40V38.80H46.92V40ZM46.92 40V38.80H49.68V40ZM49.68 40V38.80H52.44V40ZM52.44 40V38.80H55.20V40ZM55.20 40V38.80H57.96V40ZM57.96 40V38.80H60.72V40ZM60.72 40V38.80H63.48V40ZM63.48 40V38.80H66.24V40ZM66.24 40V38.80H69.00V40Z" fill="#9ab0dc"/><path d="M30.36 38.80V8.00H33.12V38.80Z" fill="#f8c98a"/></svg></div><div class="t" style="left:497.5px;top:501.8px;font-size:12px;font-weight:bold;color:#111;transform:scaleX(0.9333) translateX(-50%);transform-origin:0 0;">ICMP</div><div class="a" style="left:572px;top:444px;width:69px;height:40px;background:#fff;border-radius:4px;box-shadow:0 2px 6px rgba(0,0,0,.22);overflow:hidden"><svg style="left:0;top:0" width="69" height="40" viewBox="0 0 69 40"><path d="M0.00 40V29.30H2.76V40ZM2.76 40V28.00H5.52V40ZM5.52 40V22.00H8.28V40ZM8.28 40V18.80H11.04V40ZM11.04 40V23.80H13.80V40ZM13.80 40V23.20H16.56V40ZM16.56 40V26.90H19.32V40ZM19.32 40V20.40H22.08V40ZM22.08 40V23.20H24.84V40ZM24.84 40V20.40H27.60V40ZM27.60 40V26.90H30.36V40ZM30.36 40V10.40H33.12V40ZM33.12 40V24.00H35.88V40ZM35.88 40V14.60H38.64V40ZM38.64 40V20.90H41.40V40ZM41.40 40V14.90H44.16V40ZM44.16 40V14.90H46.92V40ZM46.92 40V23.50H49.68V40ZM49.68 40V30.30H52.44V40ZM52.44 40V8.80H55.20V40ZM55.20 40V12.30H57.96V40ZM57.96 40V15.40H60.72V40ZM60.72 40V16.40H63.48V40ZM63.48 40V10.70H66.24V40ZM66.24 40V21.70H69.00V40Z" fill="#9ab0dc"/><path d="M8.28 18.80V18.30H11.04V18.80ZM19.32 20.40V19.90H22.08V20.40ZM30.36 10.40V8.40H33.12V10.40ZM41.40 14.90V14.50H44.16V14.90ZM52.44 8.80V8.20H55.20V8.80ZM63.48 10.70V10.20H66.24V10.70Z" fill="#f8c98a"/></svg></div><div class="t" style="left:606.5px;top:501.8px;font-size:12px;font-weight:bold;color:#111;transform:scaleX(0.9214) translateX(-50%);transform-origin:0 0;">Other</div><div class="a" style="left:72px;top:546px;width:1816px;height:25px;background:#f4f4f4"></div><div class="t" style="left:84px;top:553.2px;font-size:12px;font-weight:normal;color:#222;transform:scaleX(0.8953);transform-origin:0 0;">CHANNELS (2 VISIBLE OF 2 TOTAL)</div><svg style="left:84px;top:580px" width="16" height="16" viewBox="0 0 16 16"><rect x="0" y="0" width="16" height="16" rx="3" fill="#f5a11b"/><path d="M3.6 8.2L6.6 11.2L12.4 4.8" fill="none" stroke="#fff" stroke-width="2"/></svg><div class="a" style="left:109px;top:580px;width:16px;height:16px;border-radius:8px;background:#f5a11b"></div><div class="t" style="left:130px;top:582.9px;font-size:10.5px;font-weight:normal;color:#333;transform:scaleX(0.9014);transform-origin:0 0;">Branch</div><svg style="left:276px;top:580px" width="16" height="16" viewBox="0 0 16 16"><rect x="0" y="0" width="16" height="16" rx="3" fill="#4f78c4"/><path d="M3.6 8.2L6.6 11.2L12.4 4.8" fill="none" stroke="#fff" stroke-width="2"/></svg><div class="a" style="left:301px;top:580px;width:16px;height:16px;border-radius:8px;background:#4f78c4"></div><div class="t" style="left:322.2px;top:582.9px;font-size:10.5px;font-weight:normal;color:#333;transform:scaleX(0.9147);transform-origin:0 0;">Headquarters</div><svg style="left:84px;top:604px" width="16" height="16" viewBox="0 0 16 16"><rect x="0" y="0" width="16" height="16" rx="3" fill="#7e2a08"/><path d="M3.6 8.2L6.6 11.2L12.4 4.8" fill="none" stroke="#fff" stroke-width="2"/></svg><div class="t" style="left:107.7px;top:606.2px;font-size:12px;font-weight:normal;color:#222;transform:scaleX(0.9604);transform-origin:0 0;">NPM Jitter</div><svg style="left:276px;top:604px" width="16" height="16" viewBox="0 0 16 16"><rect x="0" y="0" width="16" height="16" rx="3" fill="#5ef05e"/><path d="M3.6 8.2L6.6 11.2L12.4 4.8" fill="none" stroke="#fff" stroke-width="2"/></svg><div class="t" style="left:299.3px;top:606.2px;font-size:12px;font-weight:normal;color:#222;transform:scaleX(0.9251);transform-origin:0 0;">NPM Round Trip Time</div><svg style="left:468px;top:604px" width="16" height="16" viewBox="0 0 16 16"><rect x="0" y="0" width="16" height="16" rx="3" fill="#000"/><path d="M3.6 8.2L6.6 11.2L12.4 4.8" fill="none" stroke="#fff" stroke-width="2"/></svg><div class="t" style="left:491.6px;top:606.2px;font-size:12px;font-weight:normal;color:#222;transform:scaleX(0.9108);transform-origin:0 0;">NPM Server Response Time</div><svg style="left:660px;top:604px" width="16" height="16" viewBox="0 0 16 16"><rect x="0" y="0" width="16" height="16" rx="3" fill="#777"/><path d="M3.6 8.2L6.6 11.2L12.4 4.8" fill="none" stroke="#fff" stroke-width="2"/></svg><div class="t" style="left:683.3px;top:606.2px;font-size:12px;font-weight:normal;color:#222;transform:scaleX(0.9107);transform-origin:0 0;">3 Week Average</div><div class="a" style="left:72px;top:630px;width:1816px;height:0;border-top:1px dashed #d6d6d6"></div><svg style="left:89px;top:646px" width="12" height="10" viewBox="0 0 12 10"><path d="M1 5.5L4 8.8L11 1" fill="none" stroke="#222" stroke-width="1.3"/></svg><div class="t" style="left:102px;top:645.7px;font-size:12px;font-weight:normal;color:#222;transform:scaleX(0.9742);transform-origin:0 0;">All</div><svg style="left:126px;top:647px" width="9" height="9" viewBox="0 0 9 9"><path d="M1 1L8 8M8 1L1 8" fill="none" stroke="#222" stroke-width="1.3"/></svg><div class="t" style="left:137.7px;top:645.7px;font-size:12px;font-weight:normal;color:#222;transform:scaleX(0.9516);transform-origin:0 0;">None</div><svg style="left:1503px;top:648px" width="12" height="9" viewBox="0 0 12 9"><path d="M0.5 1H11.5M2.5 4.5H9.5M4.8 8H7.2" stroke="#222" stroke-width="1.5"/></svg><div class="t" style="left:1523px;top:647.0px;font-size:11px;font-weight:bold;color:#111;transform:scaleX(0.8737);transform-origin:0 0;">CHANGE DISPLAYED CHANNELS</div><svg style="left:1709px;top:647px" width="14" height="10" viewBox="0 0 14 10"><path d="M0.8 9L4.8 4L7.8 6.8L13 1" fill="none" stroke="#222" stroke-width="1.6"/></svg><div class="t" style="left:1730.5px;top:647.0px;font-size:11px;font-weight:bold;color:#111;transform:scaleX(0.8872);transform-origin:0 0;">GET CHANNEL STATISTICS</div><div class="a" style="left:945px;top:696px;width:70px;height:19px;background:#f4f4f4;border-radius:9.5px;box-shadow:0 1px 2px rgba(0,0,0,.35)"></div><svg style="left:975px;top:701.5px" width="10" height="7" viewBox="0 0 10 7"><path d="M1 5.8L5 2L9 5.8" fill="none" stroke="#111" stroke-width="1.6"/></svg><div class="a" style="left:62px;top:743px;width:1836px;height:230px;background:#fff;box-shadow:0 1px 2px rgba(0,0,0,.22),0 1px 8px rgba(0,0,0,.14)"></div><div class="a" style="left:62px;top:743px;width:1836px;height:76px;background:#efefef"></div><svg style="left:71px;top:760px" width="14" height="14" viewBox="0 0 14 14"><circle cx="5.6" cy="5.6" r="4.4" fill="none" stroke="#111" stroke-width="1.8"/><path d="M8.8 8.8L13 13" stroke="#111" stroke-width="2"/></svg><div class="t" style="left:96.3px;top:759.8px;font-size:15px;font-weight:bold;color:#111;transform:scaleX(0.8676);transform-origin:0 0;">Advanced analysis</div><div class="sel" style="left:237px;top:757px;width:110px;height:23px;border-color:#dcdcdc"></div><div class="t" style="left:244.4px;top:762.5px;font-size:11.5px;font-weight:normal;color:#222;transform:scaleX(0.9602);transform-origin:0 0;">2025-04-12 06:45</div><div class="t" style="left:354px;top:761.2px;font-size:12px;font-weight:bold;color:#333;">-</div><div class="sel" style="left:365px;top:757px;width:110px;height:23px;border-color:#dcdcdc"></div><div class="t" style="left:372.2px;top:762.5px;font-size:11.5px;font-weight:normal;color:#222;transform:scaleX(0.9602);transform-origin:0 0;">2025-04-12 07:45</div><div class="a" style="left:78px;top:788px;width:97px;height:32px;background:#fff"></div><div class="a" style="left:78px;top:788px;width:97px;height:3px;background:#0c1f5a"></div><svg style="left:86px;top:799px" width="13" height="13" viewBox="0 0 13 13"><path d="M5.6 0.5A6 6 0 1 0 5.6 12.5Z" fill="#0c1f5a"/><path d="M7 0.5A6 6 0 0 1 12.5 5.8H7Z" fill="#0c1f5a"/><path d="M7 7.2H12.5A6 6 0 0 1 7 12.5Z" fill="#0c1f5a"/></svg><div class="t" style="left:106.6px;top:799.5px;font-size:12.5px;font-weight:bold;color:#0c1f5a;transform:scaleX(0.8568);transform-origin:0 0;">STATISTICS</div><svg style="left:198px;top:800px" width="12" height="10" viewBox="0 0 12 10"><path d="M0 1H12M0 3.7H12M0 6.3H12M0 9H12" stroke="#777" stroke-width="1.2"/></svg><div class="t" style="left:218.5px;top:799.5px;font-size:12.5px;font-weight:normal;color:#777;transform:scaleX(0.8375);transform-origin:0 0;">LIST OF FLOWS</div><div class="t" style="right:215px;top:791.0px;font-size:11.5px;font-weight:bold;color:#222;transform:scaleX(0.9074);transform-origin:100% 0;">Previous results</div><div class="sel" style="left:1713px;top:787px;width:173px;height:25px;border-color:#dcdcdc"></div><div class="t" style="left:1719px;top:793.7px;font-size:11px;font-weight:normal;color:#222;">---</div><svg style="left:1866px;top:798px" width="8" height="5" viewBox="0 0 8 5"><path d="M0 0H8L4 4.5Z" fill="#222"/></svg><div class="t" style="left:80.3px;top:847.5px;font-size:11.5px;font-weight:bold;color:#222;transform:scaleX(0.8797);transform-origin:0 0;">Top</div><div class="sel" style="left:105px;top:841px;width:56px;height:25px;background:#f3f3f3;border-color:#d9d9d9"></div><div class="t" style="left:115px;top:847.2px;font-size:12px;font-weight:normal;color:#222;">10</div><svg style="left:147px;top:850px" width="10" height="7" viewBox="0 0 10 7"><path d="M1.2 1.4 L5.0 5.4 L8.8 1.4" fill="none" stroke="#222" stroke-width="2.1"/></svg><div class="t" style="left:177px;top:847.5px;font-size:11.5px;font-weight:bold;color:#222;transform:scaleX(0.9165);transform-origin:0 0;">Base the statistics on the parameter</div><div class="sel" style="left:364px;top:841px;width:200px;height:24px;background:#f3f3f3;border-color:#d9d9d9"></div><div class="t" style="left:374.4px;top:846.2px;font-size:12px;font-weight:normal;color:#222;transform:scaleX(0.9406);transform-origin:0 0;">IP conversation</div><svg style="left:548px;top:849px" width="10" height="7" viewBox="0 0 10 7"><path d="M1.2 1.4 L5.0 5.4 L8.8 1.4" fill="none" stroke="#222" stroke-width="2.1"/></svg><div class="t" style="left:580.6px;top:847.5px;font-size:11.5px;font-weight:bold;color:#222;transform:scaleX(0.8934);transform-origin:0 0;">Sort by</div><div class="sel" style="left:622px;top:841px;width:232px;height:25px;background:#f3f3f3;border-color:#d9d9d9"></div><div class="t" style="left:632.4px;top:847.2px;font-size:12px;font-weight:normal;color:#222;transform:scaleX(0.9307);transform-origin:0 0;">bytes</div><svg style="left:838px;top:850px" width="10" height="7" viewBox="0 0 10 7"><path d="M1.2 1.4 L5.0 5.4 L8.8 1.4" fill="none" stroke="#222" stroke-width="2.1"/></svg><div class="t" style="left:85.2px;top:881.8px;font-size:11.5px;font-weight:bold;color:#222;transform:scaleX(0.9108);transform-origin:0 0;">Aggregate</div><div class="sel" style="left:83px;top:898px;width:377px;height:38px;background:#f3f3f3;border-color:#d9d9d9"></div><div class="a" style="left:87px;top:903px;width:117px;height:24px;background:#0c1f5a;border-radius:12px"></div><div class="t" style="left:94px;top:910.0px;font-size:11.5px;font-weight:bold;color:#fff;transform:scaleX(0.8736);transform-origin:0 0;">Source IP address</div><svg style="left:188px;top:911px" width="8" height="8" viewBox="0 0 8 8"><path d="M0.8 0.8L7.2 7.2M7.2 0.8L0.8 7.2" stroke="#fff" stroke-width="1.4"/></svg><div class="a" style="left:207px;top:903px;width:141px;height:24px;background:#0c1f5a;border-radius:12px"></div><div class="t" style="left:213.8px;top:910.0px;font-size:11.5px;font-weight:bold;color:#fff;transform:scaleX(0.9048);transform-origin:0 0;">Destination IP address</div><svg style="left:332px;top:911px" width="8" height="8" viewBox="0 0 8 8"><path d="M0.8 0.8L7.2 7.2M7.2 0.8L0.8 7.2" stroke="#fff" stroke-width="1.4"/></svg><svg style="left:439px;top:914px" width="7" height="4" viewBox="0 0 7 4"><path d="M0.5 0.5L3.5 3.5L6.5 0.5" fill="none" stroke="#555" stroke-width="1"/></svg><div class="a" style="left:82px;top:942px;width:10px;height:10px;border:1px solid #777;border-radius:2px;background:#fff"></div><div class="t" style="left:98.7px;top:942.5px;font-size:11.5px;font-weight:bold;color:#222;transform:scaleX(0.8972);transform-origin:0 0;">Bidirectionally</div><div class="a" style="left:474px;top:890px;width:10px;height:10px;border:1px solid #777;border-radius:2px;background:#fff"></div><div class="sel" style="left:491px;top:884px;width:160px;height:24px;background:#e9e9e9;border-color:#e0e0e0"></div><div class="sel" style="left:660px;top:884px;width:25px;height:24px;background:#e9e9e9;border-color:#d8d8d8"></div><svg style="left:636px;top:894px" width="9" height="5" viewBox="0 0 9 5"><path d="M0.5 0.5L4.5 4.5L8.5 0.5" fill="none" stroke="#aaa" stroke-width="1"/></svg><div class="a" style="left:474px;top:947px;width:10px;height:10px;border:1px solid #777;border-radius:2px;background:#fff"></div><div class="sel" style="left:491px;top:941px;width:160px;height:24px;background:#e9e9e9;border-color:#e0e0e0"></div><div class="sel" style="left:660px;top:941px;width:25px;height:24px;background:#e9e9e9;border-color:#d8d8d8"></div><svg style="left:636px;top:951px" width="9" height="5" viewBox="0 0 9 5"><path d="M0.5 0.5L4.5 4.5L8.5 0.5" fill="none" stroke="#aaa" stroke-width="1"/></svg><div class="t" style="left:501px;top:890.5px;font-size:11.5px;font-weight:normal;color:#aaa;transform:scaleX(0.9622);transform-origin:0 0;">Source IPv4 mask</div><div class="t" style="left:666px;top:890.5px;font-size:11.5px;font-weight:normal;color:#aaa;">24</div><div class="t" style="left:501px;top:947.5px;font-size:11.5px;font-weight:normal;color:#aaa;transform:scaleX(1.0225);transform-origin:0 0;">Destination IPv4 mask</div><div class="t" style="left:666px;top:947.5px;font-size:11.5px;font-weight:normal;color:#aaa;">24</div><div class="a" style="left:900px;top:247px;width:160px;height:108px;background:#eeeeee;border:1px solid #d2d2d2;border-radius:0 0 2px 2px;box-shadow:2px 3px 5px rgba(0,0,0,.38)"></div><div class="a" style="left:901px;top:282px;width:159px;height:1px;background:#cfcfcf"></div><div class="a" style="left:901px;top:318px;width:159px;height:1px;background:#cfcfcf"></div><div class="t" style="left:925.2px;top:250.6px;font-size:10.5px;font-weight:normal;color:#333;transform:scaleX(1.0144);transform-origin:0 0;">Top 10 statistics by</div><div class="t" style="left:925.2px;top:267.3px;font-size:10.5px;font-weight:normal;color:#333;transform:scaleX(1.0053);transform-origin:0 0;">First flows</div><div class="t" style="left:926.7px;top:286.2px;font-size:10.5px;font-weight:normal;color:#333;transform:scaleX(1.0045);transform-origin:0 0;">Move left</div><div class="t" style="left:926.7px;top:304.3px;font-size:10.5px;font-weight:normal;color:#333;transform:scaleX(0.9932);transform-origin:0 0;">Move right</div><div class="t" style="left:926.7px;top:322.3px;font-size:10.5px;font-weight:normal;color:#333;transform:scaleX(0.9934);transform-origin:0 0;">Zoom all</div><div class="t" style="left:926.7px;top:340.2px;font-size:10.5px;font-weight:normal;color:#333;transform:scaleX(0.9952);transform-origin:0 0;">Duplicate tab</div><svg style="left:1045px;top:252.5px" width="4" height="6" viewBox="0 0 4 6"><path d="M0.5 0L3.5 3L0.5 6Z" fill="#222"/></svg><svg style="left:1045px;top:269.5px" width="4" height="6" viewBox="0 0 4 6"><path d="M0.5 0L3.5 3L0.5 6Z" fill="#222"/></svg><svg style="left:906px;top:250px" width="12" height="12" viewBox="0 0 12 12"><circle cx="6" cy="6" r="5.6" fill="#f39a26"/><path d="M6 6V0.4A5.6 5.6 0 0 0 0.5 5.2Z" fill="#3f8fd6"/><path d="M6 6L0.5 5.2A5.6 5.6 0 0 0 3.2 10.9Z" fill="#6aa84f"/></svg><svg style="left:906px;top:266px" width="13" height="12" viewBox="0 0 13 12"><g fill="#c9c9c9"><rect x="0" y="0.5" width="13" height="2"/><rect x="0" y="3.5" width="13" height="2"/><rect x="0" y="6.5" width="13" height="2"/><rect x="0" y="9.5" width="13" height="2"/></g><path d="M4.3 0V12M8.6 0V12" stroke="#eee" stroke-width="0.8"/></svg><svg style="left:906px;top:285px" width="12" height="12" viewBox="0 0 12 12"><path d="M0.5 6L6 0.8V3.6H11.5V8.4H6V11.2Z" fill="#5ccc14"/><path d="M6 3.6H11.5V6H0.5L6 0.8Z" fill="#8ee04a"/></svg><svg style="left:906px;top:303px" width="12" height="12" viewBox="0 0 12 12"><path d="M11.5 6L6 0.8V3.6H0.5V8.4H6V11.2Z" fill="#5ccc14"/><path d="M6 3.6H0.5V6H11.5L6 0.8Z" fill="#8ee04a"/></svg><svg style="left:905px;top:321px" width="13" height="13" viewBox="0 0 13 13"><circle cx="5.3" cy="5.3" r="4.4" fill="#eef4fb" stroke="#7aa0c8" stroke-width="1.1"/><path d="M8.4 8.4L12 12" stroke="#555" stroke-width="1.8"/><text x="5.3" y="7.3" font-size="5.5" font-family="Liberation Sans" font-weight="bold" fill="#2c64b0" text-anchor="middle">1</text></svg><svg style="left:905px;top:339px" width="13" height="13" viewBox="0 0 13 13"><rect x="0.6" y="0.6" width="7" height="9" fill="#f4f8fc" stroke="#3b86d0" stroke-width="1.1"/><rect x="5.2" y="3.4" width="7" height="9" fill="#f4f8fc" stroke="#3b86d0" stroke-width="1.1"/></svg><div class="a" style="left:1060px;top:247px;width:203px;height:457px;background:#eeeeee;border:1px solid #d2d2d2;border-radius:0 0 2px 2px;box-shadow:3px 3px 5px rgba(0,0,0,.5)"></div><div class="a" style="left:1060px;top:247px;width:203px;height:18px;background:linear-gradient(#52bdf7,#2c95dd)"></div><div class="t" style="left:1086.9px;top:250.0px;font-size:10.5px;font-weight:normal;color:#fff;transform:scaleX(0.9776);transform-origin:0 0;">Conversations IP – IP</div><svg style="left:1066px;top:249.1px" width="12" height="12" viewBox="0 0 12 12"><path d="M1.5 2.5H4M1.5 2.5V9M1.5 9H4" stroke="#ffffff" stroke-width="0.9" stroke-dasharray="1 0.8" fill="none"/><rect x="5" y="0.5" width="3" height="4" fill="#e6f3fd"/><rect x="8.5" y="1.5" width="3.5" height="2.5" fill="#ffffff"/><rect x="1" y="8.5" width="3" height="3.5" fill="#e6f3fd"/><rect x="4.3" y="9.5" width="3" height="2.2" fill="#ffffff"/></svg><svg style="left:1247.5px;top:250.9px" width="8" height="8" viewBox="0 0 8 8"><path d="M2.3 1.2H6.6V4.9L5.4 6.5H1.1V2.8Z" fill="#f4f4f4" stroke="#111" stroke-width="1.5" stroke-linejoin="round"/></svg><div class="t" style="left:1086.9px;top:267.6px;font-size:10.5px;font-weight:normal;color:#333;transform:scaleX(1.0033);transform-origin:0 0;">Conversations port – port</div><svg style="left:1066px;top:266.7px" width="12" height="12" viewBox="0 0 12 12"><path d="M1.5 2.5H4M1.5 2.5V9M1.5 9H4" stroke="#8fb3d9" stroke-width="0.9" stroke-dasharray="1 0.8" fill="none"/><rect x="5" y="0.5" width="3" height="4" fill="#5d8fc6"/><rect x="8.5" y="1.5" width="3.5" height="2.5" fill="#9fc0e6"/><rect x="1" y="8.5" width="3" height="3.5" fill="#5d8fc6"/><rect x="4.3" y="9.5" width="3" height="2.2" fill="#9fc0e6"/></svg><svg style="left:1247.5px;top:268.5px" width="8" height="8" viewBox="0 0 8 8"><path d="M2.3 1.2H6.6V4.9L5.4 6.5H1.1V2.8Z" fill="#f4f4f4" stroke="#111" stroke-width="1.5" stroke-linejoin="round"/></svg><div class="t" style="left:1086.9px;top:285.2px;font-size:10.5px;font-weight:normal;color:#333;transform:scaleX(0.9875);transform-origin:0 0;">Conversation IP:port – IP:port</div><svg style="left:1066px;top:284.3px" width="12" height="12" viewBox="0 0 12 12"><path d="M1.5 2.5H4M1.5 2.5V9M1.5 9H4" stroke="#8fb3d9" stroke-width="0.9" stroke-dasharray="1 0.8" fill="none"/><rect x="5" y="0.5" width="3" height="4" fill="#5d8fc6"/><rect x="8.5" y="1.5" width="3.5" height="2.5" fill="#9fc0e6"/><rect x="1" y="8.5" width="3" height="3.5" fill="#5d8fc6"/><rect x="4.3" y="9.5" width="3" height="2.2" fill="#9fc0e6"/></svg><svg style="left:1247.5px;top:286.1px" width="8" height="8" viewBox="0 0 8 8"><path d="M2.3 1.2H6.6V4.9L5.4 6.5H1.1V2.8Z" fill="#f4f4f4" stroke="#111" stroke-width="1.5" stroke-linejoin="round"/></svg><div class="t" style="left:1086.9px;top:302.8px;font-size:10.5px;font-weight:normal;color:#333;transform:scaleX(0.9632);transform-origin:0 0;">Any IP address</div><svg style="left:1066px;top:301.9px" width="12" height="12" viewBox="0 0 12 12"><rect x="0.5" y="1" width="3.8" height="10" fill="#3f74b4"/><rect x="1" y="2" width="2.8" height="1.2" fill="#a9c8ea"/><rect x="5" y="4" width="7" height="5" rx="0.8" fill="#9cc3ea"/><rect x="6" y="5" width="5" height="3" fill="#e2f0fb"/><rect x="6.8" y="9" width="3.4" height="2" fill="#7aa6d6"/></svg><svg style="left:1247.5px;top:303.7px" width="8" height="8" viewBox="0 0 8 8"><path d="M2.3 1.2H6.6V4.9L5.4 6.5H1.1V2.8Z" fill="#f4f4f4" stroke="#111" stroke-width="1.5" stroke-linejoin="round"/></svg><div class="t" style="left:1086.9px;top:320.4px;font-size:10.5px;font-weight:normal;color:#333;transform:scaleX(0.9640);transform-origin:0 0;">Source IP address</div><svg style="left:1066px;top:319.5px" width="12" height="12" viewBox="0 0 12 12"><rect x="0.5" y="1" width="3.8" height="10" fill="#3f74b4"/><rect x="1" y="2" width="2.8" height="1.2" fill="#a9c8ea"/><rect x="5" y="4" width="7" height="5" rx="0.8" fill="#9cc3ea"/><rect x="6" y="5" width="5" height="3" fill="#e2f0fb"/><rect x="6.8" y="9" width="3.4" height="2" fill="#7aa6d6"/></svg><svg style="left:1247.5px;top:321.3px" width="8" height="8" viewBox="0 0 8 8"><path d="M2.3 1.2H6.6V4.9L5.4 6.5H1.1V2.8Z" fill="#f4f4f4" stroke="#111" stroke-width="1.5" stroke-linejoin="round"/></svg><div class="t" style="left:1086.9px;top:338.0px;font-size:10.5px;font-weight:normal;color:#333;transform:scaleX(0.98);transform-origin:0 0;">Destination IP address</div><svg style="left:1066px;top:337.1px" width="12" height="12" viewBox="0 0 12 12"><rect x="0.5" y="1" width="3.8" height="10" fill="#3f74b4"/><rect x="1" y="2" width="2.8" height="1.2" fill="#a9c8ea"/><rect x="5" y="4" width="7" height="5" rx="0.8" fill="#9cc3ea"/><rect x="6" y="5" width="5" height="3" fill="#e2f0fb"/><rect x="6.8" y="9" width="3.4" height="2" fill="#7aa6d6"/></svg><svg style="left:1247.5px;top:338.9px" width="8" height="8" viewBox="0 0 8 8"><path d="M2.3 1.2H6.6V4.9L5.4 6.5H1.1V2.8Z" fill="#f4f4f4" stroke="#111" stroke-width="1.5" stroke-linejoin="round"/></svg><div class="t" style="left:1086.9px;top:355.6px;font-size:10.5px;font-weight:normal;color:#333;transform:scaleX(0.98);transform-origin:0 0;">Flow source IP address</div><svg style="left:1066px;top:354.7px" width="12" height="12" viewBox="0 0 12 12"><rect x="0.5" y="1" width="3.8" height="10" fill="#3f74b4"/><rect x="1" y="2" width="2.8" height="1.2" fill="#a9c8ea"/><rect x="5" y="4" width="7" height="5" rx="0.8" fill="#9cc3ea"/><rect x="6" y="5" width="5" height="3" fill="#e2f0fb"/><rect x="6.8" y="9" width="3.4" height="2" fill="#7aa6d6"/></svg><svg style="left:1247.5px;top:356.5px" width="8" height="8" viewBox="0 0 8 8"><path d="M2.3 1.2H6.6V4.9L5.4 6.5H1.1V2.8Z" fill="#f4f4f4" stroke="#111" stroke-width="1.5" stroke-linejoin="round"/></svg><div class="t" style="left:1086.9px;top:373.2px;font-size:10.5px;font-weight:normal;color:#333;transform:scaleX(0.98);transform-origin:0 0;">Port</div><svg style="left:1066px;top:372.3px" width="12" height="12" viewBox="0 0 12 12"><rect x="0.5" y="0.5" width="11" height="11" rx="2" fill="#66c21a"/><circle cx="6" cy="6" r="2.8" fill="#f2fbe8"/></svg><svg style="left:1247.5px;top:374.1px" width="8" height="8" viewBox="0 0 8 8"><path d="M2.3 1.2H6.6V4.9L5.4 6.5H1.1V2.8Z" fill="#f4f4f4" stroke="#111" stroke-width="1.5" stroke-linejoin="round"/></svg><div class="t" style="left:1086.9px;top:390.8px;font-size:10.5px;font-weight:normal;color:#333;transform:scaleX(0.98);transform-origin:0 0;">Source port</div><svg style="left:1066px;top:389.9px" width="12" height="12" viewBox="0 0 12 12"><rect x="0.5" y="0.5" width="11" height="11" rx="2" fill="#66c21a"/><circle cx="6" cy="6" r="2.8" fill="#f2fbe8"/></svg><svg style="left:1247.5px;top:391.7px" width="8" height="8" viewBox="0 0 8 8"><path d="M2.3 1.2H6.6V4.9L5.4 6.5H1.1V2.8Z" fill="#f4f4f4" stroke="#111" stroke-width="1.5" stroke-linejoin="round"/></svg><div class="t" style="left:1086.9px;top:408.4px;font-size:10.5px;font-weight:normal;color:#333;transform:scaleX(0.98);transform-origin:0 0;">Destination port</div><svg style="left:1066px;top:407.5px" width="12" height="12" viewBox="0 0 12 12"><rect x="0.5" y="0.5" width="11" height="11" rx="2" fill="#66c21a"/><circle cx="6" cy="6" r="2.8" fill="#f2fbe8"/></svg><svg style="left:1247.5px;top:409.3px" width="8" height="8" viewBox="0 0 8 8"><path d="M2.3 1.2H6.6V4.9L5.4 6.5H1.1V2.8Z" fill="#f4f4f4" stroke="#111" stroke-width="1.5" stroke-linejoin="round"/></svg><div class="t" style="left:1086.9px;top:426.0px;font-size:10.5px;font-weight:normal;color:#333;transform:scaleX(0.98);transform-origin:0 0;">L7 application</div><svg style="left:1066px;top:425.1px" width="12" height="12" viewBox="0 0 12 12"><rect x="0.7" y="1.7" width="11" height="9" fill="#f4f6fc" stroke="#6d93d4" stroke-width="1.2"/></svg><svg style="left:1247.5px;top:426.9px" width="8" height="8" viewBox="0 0 8 8"><path d="M2.3 1.2H6.6V4.9L5.4 6.5H1.1V2.8Z" fill="#f4f4f4" stroke="#111" stroke-width="1.5" stroke-linejoin="round"/></svg><div class="t" style="left:1086.9px;top:443.6px;font-size:10.5px;font-weight:normal;color:#333;transform:scaleX(0.98);transform-origin:0 0;">HTTP URL</div><svg style="left:1066px;top:442.7px" width="12" height="12" viewBox="0 0 12 12"><rect x="0.5" y="1" width="3.8" height="10" fill="#3f74b4"/><rect x="1" y="2" width="2.8" height="1.2" fill="#a9c8ea"/><rect x="5" y="4" width="7" height="5" rx="0.8" fill="#9cc3ea"/><rect x="6" y="5" width="5" height="3" fill="#e2f0fb"/><rect x="6.8" y="9" width="3.4" height="2" fill="#7aa6d6"/></svg><svg style="left:1247.5px;top:444.5px" width="8" height="8" viewBox="0 0 8 8"><path d="M2.3 1.2H6.6V4.9L5.4 6.5H1.1V2.8Z" fill="#f4f4f4" stroke="#111" stroke-width="1.5" stroke-linejoin="round"/></svg><div class="t" style="left:1086.9px;top:461.2px;font-size:10.5px;font-weight:normal;color:#333;transform:scaleX(0.98);transform-origin:0 0;">HTTP hostname</div><svg style="left:1066px;top:460.3px" width="12" height="12" viewBox="0 0 12 12"><rect x="0.5" y="1" width="3.8" height="10" fill="#3f74b4"/><rect x="1" y="2" width="2.8" height="1.2" fill="#a9c8ea"/><rect x="5" y="4" width="7" height="5" rx="0.8" fill="#9cc3ea"/><rect x="6" y="5" width="5" height="3" fill="#e2f0fb"/><rect x="6.8" y="9" width="3.4" height="2" fill="#7aa6d6"/></svg><svg style="left:1247.5px;top:462.1px" width="8" height="8" viewBox="0 0 8 8"><path d="M2.3 1.2H6.6V4.9L5.4 6.5H1.1V2.8Z" fill="#f4f4f4" stroke="#111" stroke-width="1.5" stroke-linejoin="round"/></svg><div class="t" style="left:1086.9px;top:478.8px;font-size:10.5px;font-weight:normal;color:#333;transform:scaleX(0.98);transform-origin:0 0;">HTTP host OS</div><svg style="left:1066px;top:477.9px" width="12" height="12" viewBox="0 0 12 12"><rect x="0.5" y="1" width="3.8" height="10" fill="#3f74b4"/><rect x="1" y="2" width="2.8" height="1.2" fill="#a9c8ea"/><rect x="5" y="4" width="7" height="5" rx="0.8" fill="#9cc3ea"/><rect x="6" y="5" width="5" height="3" fill="#e2f0fb"/><rect x="6.8" y="9" width="3.4" height="2" fill="#7aa6d6"/></svg><svg style="left:1247.5px;top:479.7px" width="8" height="8" viewBox="0 0 8 8"><path d="M2.3 1.2H6.6V4.9L5.4 6.5H1.1V2.8Z" fill="#f4f4f4" stroke="#111" stroke-width="1.5" stroke-linejoin="round"/></svg><div class="t" style="left:1086.9px;top:496.4px;font-size:10.5px;font-weight:normal;color:#333;transform:scaleX(0.98);transform-origin:0 0;">HTTP host application</div><svg style="left:1066px;top:495.5px" width="12" height="12" viewBox="0 0 12 12"><rect x="0.5" y="1" width="3.8" height="10" fill="#3f74b4"/><rect x="1" y="2" width="2.8" height="1.2" fill="#a9c8ea"/><rect x="5" y="4" width="7" height="5" rx="0.8" fill="#9cc3ea"/><rect x="6" y="5" width="5" height="3" fill="#e2f0fb"/><rect x="6.8" y="9" width="3.4" height="2" fill="#7aa6d6"/></svg><svg style="left:1247.5px;top:497.3px" width="8" height="8" viewBox="0 0 8 8"><path d="M2.3 1.2H6.6V4.9L5.4 6.5H1.1V2.8Z" fill="#f4f4f4" stroke="#111" stroke-width="1.5" stroke-linejoin="round"/></svg><div class="t" style="left:1086.9px;top:514.0px;font-size:10.5px;font-weight:normal;color:#333;transform:scaleX(0.98);transform-origin:0 0;">Any VLAN label</div><svg style="left:1066px;top:513.1px" width="12" height="12" viewBox="0 0 12 12"><rect x="3.8" y="0.5" width="4.4" height="3.4" fill="#a9c8ea" stroke="#4f86c6" stroke-width="0.7"/><rect x="0.5" y="6" width="4.4" height="3.4" fill="#a9c8ea" stroke="#4f86c6" stroke-width="0.7"/><rect x="7.1" y="6" width="4.4" height="3.4" fill="#a9c8ea" stroke="#4f86c6" stroke-width="0.7"/><path d="M6 3.9V5M2.7 6V5H9.3V6" stroke="#4f86c6" stroke-width="0.7" fill="none"/><path d="M0 11.2H12" stroke="#6cc644" stroke-width="1.2"/></svg><svg style="left:1247.5px;top:514.9px" width="8" height="8" viewBox="0 0 8 8"><path d="M2.3 1.2H6.6V4.9L5.4 6.5H1.1V2.8Z" fill="#f4f4f4" stroke="#111" stroke-width="1.5" stroke-linejoin="round"/></svg><div class="t" style="left:1086.9px;top:531.6px;font-size:10.5px;font-weight:normal;color:#333;transform:scaleX(0.98);transform-origin:0 0;">Source VLAN label</div><svg style="left:1066px;top:530.7px" width="12" height="12" viewBox="0 0 12 12"><rect x="3.8" y="0.5" width="4.4" height="3.4" fill="#a9c8ea" stroke="#4f86c6" stroke-width="0.7"/><rect x="0.5" y="6" width="4.4" height="3.4" fill="#a9c8ea" stroke="#4f86c6" stroke-width="0.7"/><rect x="7.1" y="6" width="4.4" height="3.4" fill="#a9c8ea" stroke="#4f86c6" stroke-width="0.7"/><path d="M6 3.9V5M2.7 6V5H9.3V6" stroke="#4f86c6" stroke-width="0.7" fill="none"/><path d="M0 11.2H12" stroke="#6cc644" stroke-width="1.2"/></svg><svg style="left:1247.5px;top:532.5px" width="8" height="8" viewBox="0 0 8 8"><path d="M2.3 1.2H6.6V4.9L5.4 6.5H1.1V2.8Z" fill="#f4f4f4" stroke="#111" stroke-width="1.5" stroke-linejoin="round"/></svg><div class="t" style="left:1086.9px;top:549.2px;font-size:10.5px;font-weight:normal;color:#333;transform:scaleX(0.98);transform-origin:0 0;">Destination VLAN label</div><svg style="left:1066px;top:548.3px" width="12" height="12" viewBox="0 0 12 12"><rect x="3.8" y="0.5" width="4.4" height="3.4" fill="#a9c8ea" stroke="#4f86c6" stroke-width="0.7"/><rect x="0.5" y="6" width="4.4" height="3.4" fill="#a9c8ea" stroke="#4f86c6" stroke-width="0.7"/><rect x="7.1" y="6" width="4.4" height="3.4" fill="#a9c8ea" stroke="#4f86c6" stroke-width="0.7"/><path d="M6 3.9V5M2.7 6V5H9.3V6" stroke="#4f86c6" stroke-width="0.7" fill="none"/><path d="M0 11.2H12" stroke="#6cc644" stroke-width="1.2"/></svg><svg style="left:1247.5px;top:550.1px" width="8" height="8" viewBox="0 0 8 8"><path d="M2.3 1.2H6.6V4.9L5.4 6.5H1.1V2.8Z" fill="#f4f4f4" stroke="#111" stroke-width="1.5" stroke-linejoin="round"/></svg><div class="t" style="left:1086.9px;top:566.8px;font-size:10.5px;font-weight:normal;color:#333;transform:scaleX(0.98);transform-origin:0 0;">Any AS</div><svg style="left:1066px;top:565.9px" width="12" height="12" viewBox="0 0 12 12"><circle cx="6" cy="6" r="4.6" fill="none" stroke="#5cbf18" stroke-width="2"/></svg><svg style="left:1247.5px;top:567.7px" width="8" height="8" viewBox="0 0 8 8"><path d="M2.3 1.2H6.6V4.9L5.4 6.5H1.1V2.8Z" fill="#f4f4f4" stroke="#111" stroke-width="1.5" stroke-linejoin="round"/></svg><div class="t" style="left:1086.9px;top:584.4px;font-size:10.5px;font-weight:normal;color:#333;transform:scaleX(0.98);transform-origin:0 0;">Source AS</div><svg style="left:1066px;top:583.5px" width="12" height="12" viewBox="0 0 12 12"><circle cx="6" cy="6" r="4.6" fill="none" stroke="#5cbf18" stroke-width="2"/></svg><svg style="left:1247.5px;top:585.3px" width="8" height="8" viewBox="0 0 8 8"><path d="M2.3 1.2H6.6V4.9L5.4 6.5H1.1V2.8Z" fill="#f4f4f4" stroke="#111" stroke-width="1.5" stroke-linejoin="round"/></svg><div class="t" style="left:1086.9px;top:602.0px;font-size:10.5px;font-weight:normal;color:#333;transform:scaleX(0.98);transform-origin:0 0;">Destination AS</div><svg style="left:1066px;top:601.1px" width="12" height="12" viewBox="0 0 12 12"><circle cx="6" cy="6" r="4.6" fill="none" stroke="#5cbf18" stroke-width="2"/></svg><svg style="left:1247.5px;top:602.9px" width="8" height="8" viewBox="0 0 8 8"><path d="M2.3 1.2H6.6V4.9L5.4 6.5H1.1V2.8Z" fill="#f4f4f4" stroke="#111" stroke-width="1.5" stroke-linejoin="round"/></svg><div class="t" style="left:1086.9px;top:619.6px;font-size:10.5px;font-weight:normal;color:#333;transform:scaleX(0.98);transform-origin:0 0;">Source MAC address</div><svg style="left:1066px;top:618.7px" width="12" height="12" viewBox="0 0 12 12"><path d="M6.5 0.8H11.2V5.5L5.5 11.2L0.8 6.5Z" fill="#ef5a28"/><circle cx="9" cy="3" r="1" fill="#fff"/></svg><svg style="left:1247.5px;top:620.5px" width="8" height="8" viewBox="0 0 8 8"><path d="M2.3 1.2H6.6V4.9L5.4 6.5H1.1V2.8Z" fill="#f4f4f4" stroke="#111" stroke-width="1.5" stroke-linejoin="round"/></svg><div class="t" style="left:1086.9px;top:637.2px;font-size:10.5px;font-weight:normal;color:#333;transform:scaleX(0.98);transform-origin:0 0;">Destination MAC address</div><svg style="left:1066px;top:636.3px" width="12" height="12" viewBox="0 0 12 12"><path d="M6.5 0.8H11.2V5.5L5.5 11.2L0.8 6.5Z" fill="#ef5a28"/><circle cx="9" cy="3" r="1" fill="#fff"/></svg><svg style="left:1247.5px;top:638.1px" width="8" height="8" viewBox="0 0 8 8"><path d="M2.3 1.2H6.6V4.9L5.4 6.5H1.1V2.8Z" fill="#f4f4f4" stroke="#111" stroke-width="1.5" stroke-linejoin="round"/></svg><div class="t" style="left:1086.9px;top:654.8px;font-size:10.5px;font-weight:normal;color:#333;transform:scaleX(0.98);transform-origin:0 0;">Any interface</div><svg style="left:1066px;top:653.9px" width="12" height="12" viewBox="0 0 12 12"><rect x="3.8" y="0.5" width="4.4" height="3.4" fill="#a9c8ea" stroke="#4f86c6" stroke-width="0.7"/><rect x="0.5" y="6" width="4.4" height="3.4" fill="#a9c8ea" stroke="#4f86c6" stroke-width="0.7"/><rect x="7.1" y="6" width="4.4" height="3.4" fill="#a9c8ea" stroke="#4f86c6" stroke-width="0.7"/><path d="M6 3.9V5M2.7 6V5H9.3V6" stroke="#4f86c6" stroke-width="0.7" fill="none"/><path d="M0 11.2H12" stroke="#6cc644" stroke-width="1.2"/></svg><svg style="left:1247.5px;top:655.7px" width="8" height="8" viewBox="0 0 8 8"><path d="M2.3 1.2H6.6V4.9L5.4 6.5H1.1V2.8Z" fill="#f4f4f4" stroke="#111" stroke-width="1.5" stroke-linejoin="round"/></svg><div class="t" style="left:1086.9px;top:672.4px;font-size:10.5px;font-weight:normal;color:#333;transform:scaleX(0.98);transform-origin:0 0;">Input interface</div><svg style="left:1066px;top:671.5px" width="12" height="12" viewBox="0 0 12 12"><rect x="3.8" y="0.5" width="4.4" height="3.4" fill="#a9c8ea" stroke="#4f86c6" stroke-width="0.7"/><rect x="0.5" y="6" width="4.4" height="3.4" fill="#a9c8ea" stroke="#4f86c6" stroke-width="0.7"/><rect x="7.1" y="6" width="4.4" height="3.4" fill="#a9c8ea" stroke="#4f86c6" stroke-width="0.7"/><path d="M6 3.9V5M2.7 6V5H9.3V6" stroke="#4f86c6" stroke-width="0.7" fill="none"/><path d="M0 11.2H12" stroke="#6cc644" stroke-width="1.2"/></svg><svg style="left:1247.5px;top:673.3px" width="8" height="8" viewBox="0 0 8 8"><path d="M2.3 1.2H6.6V4.9L5.4 6.5H1.1V2.8Z" fill="#f4f4f4" stroke="#111" stroke-width="1.5" stroke-linejoin="round"/></svg><div class="t" style="left:1086.9px;top:690.0px;font-size:10.5px;font-weight:normal;color:#333;transform:scaleX(0.98);transform-origin:0 0;">Output interface</div><svg style="left:1066px;top:689.1px" width="12" height="12" viewBox="0 0 12 12"><rect x="3.8" y="0.5" width="4.4" height="3.4" fill="#a9c8ea" stroke="#4f86c6" stroke-width="0.7"/><rect x="0.5" y="6" width="4.4" height="3.4" fill="#a9c8ea" stroke="#4f86c6" stroke-width="0.7"/><rect x="7.1" y="6" width="4.4" height="3.4" fill="#a9c8ea" stroke="#4f86c6" stroke-width="0.7"/><path d="M6 3.9V5M2.7 6V5H9.3V6" stroke="#4f86c6" stroke-width="0.7" fill="none"/><path d="M0 11.2H12" stroke="#6cc644" stroke-width="1.2"/></svg><svg style="left:1247.5px;top:690.9px" width="8" height="8" viewBox="0 0 8 8"><path d="M2.3 1.2H6.6V4.9L5.4 6.5H1.1V2.8Z" fill="#f4f4f4" stroke="#111" stroke-width="1.5" stroke-linejoin="round"/></svg></body></html>
